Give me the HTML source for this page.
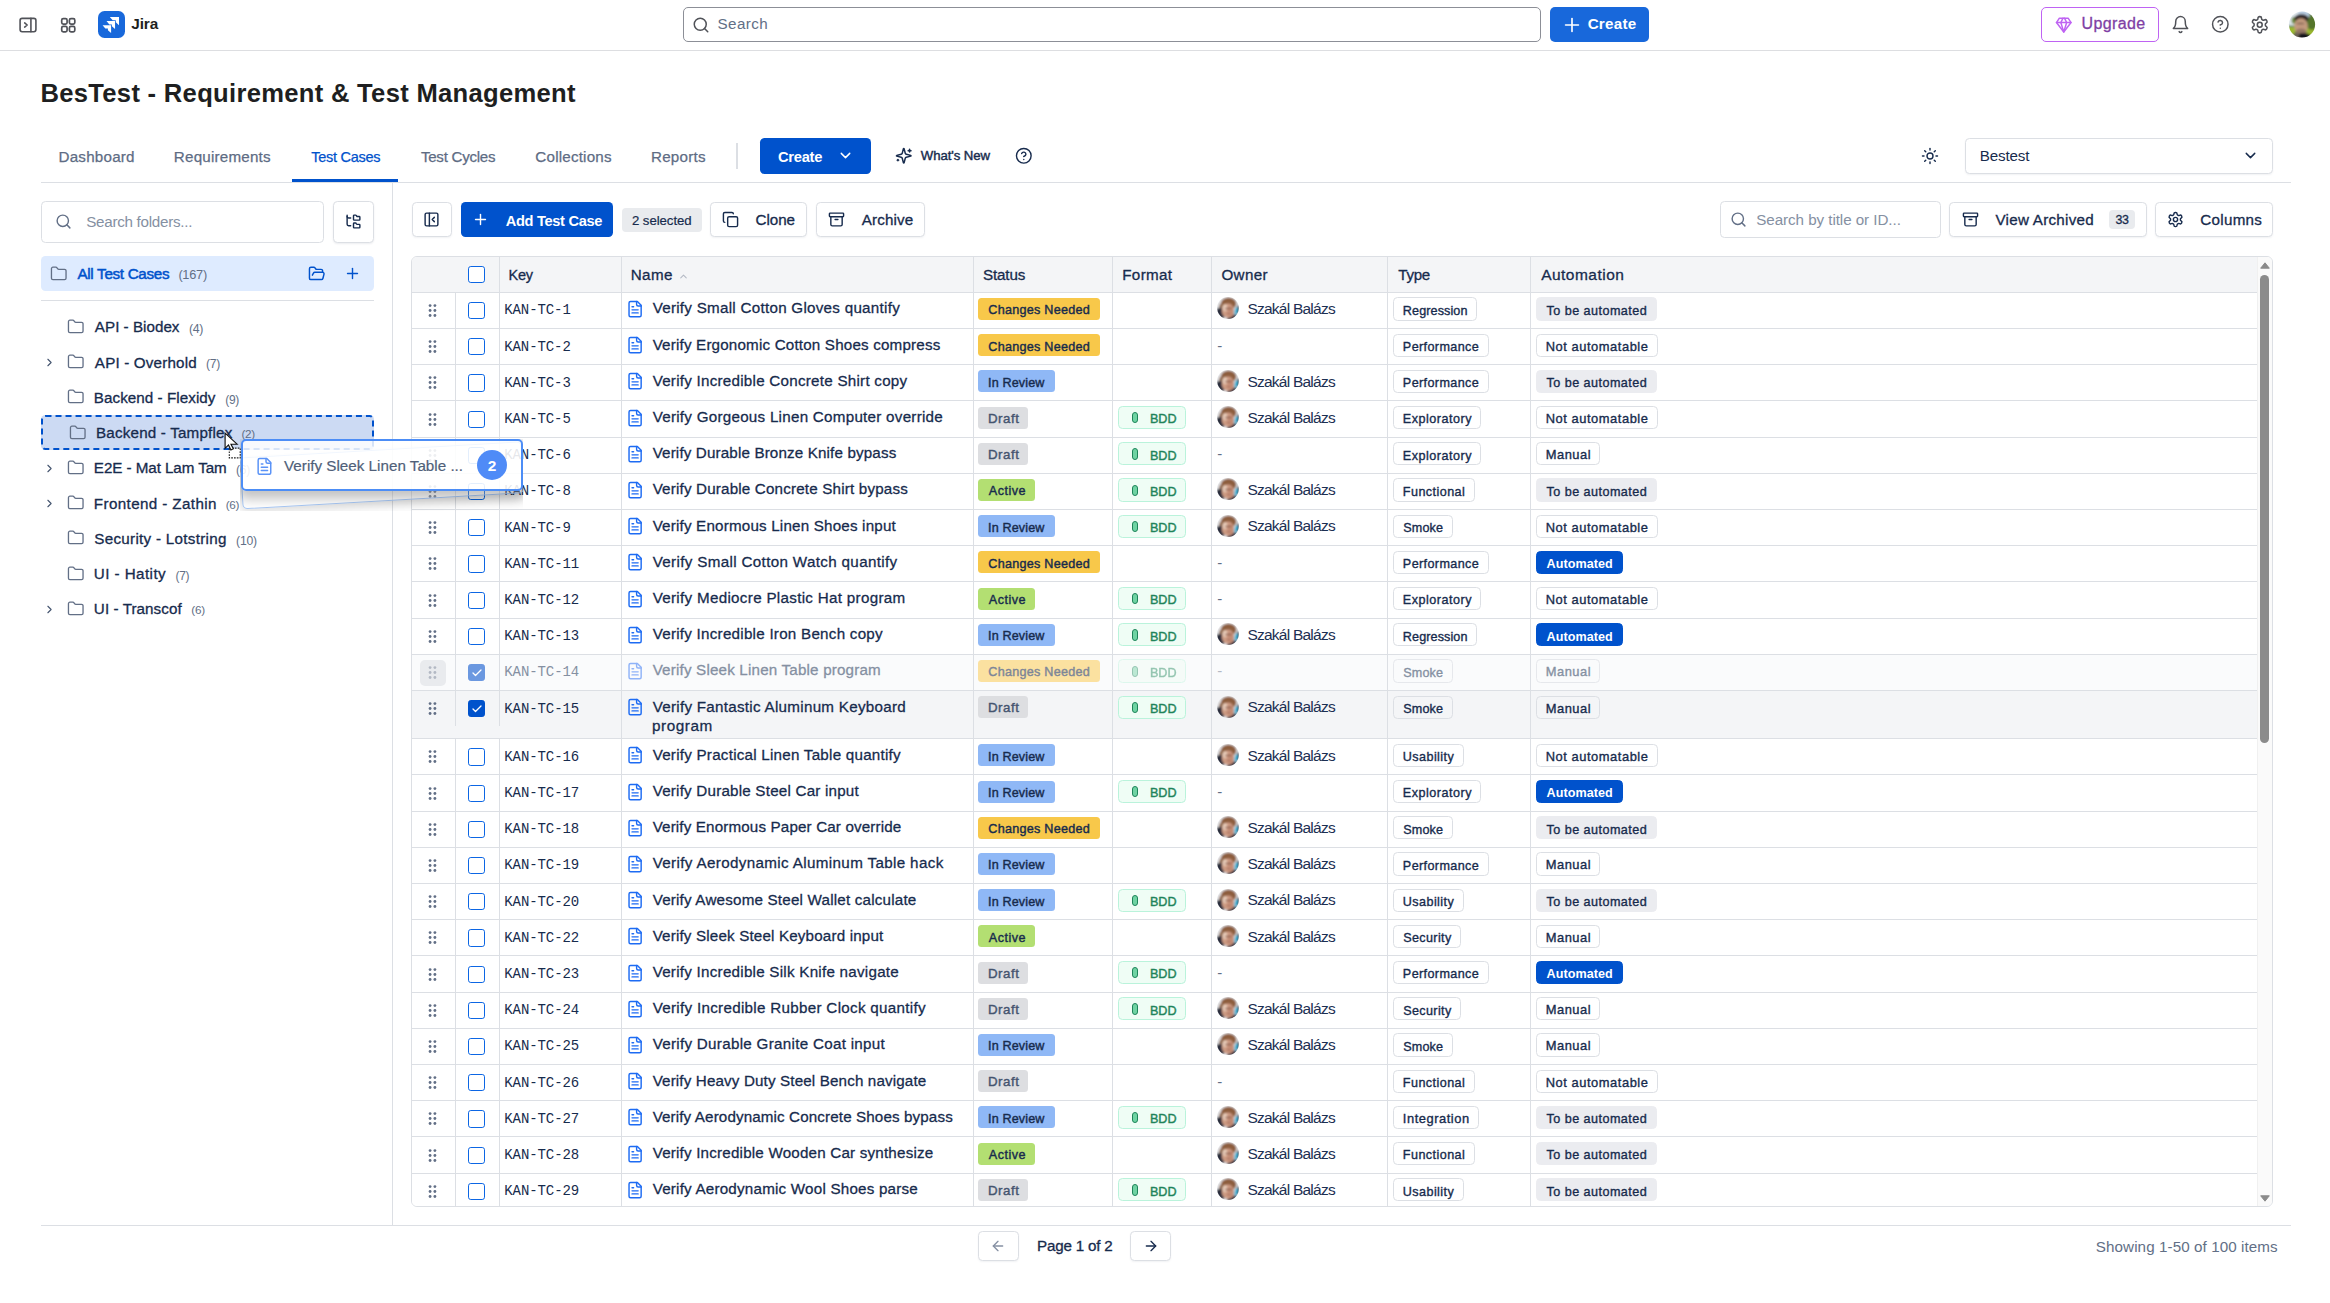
<!DOCTYPE html><html lang="en"><head><meta charset="utf-8"><title>BesTest - Requirement &amp; Test Management</title><style>
*{box-sizing:border-box;margin:0;padding:0}
html,body{width:2330px;height:1303px;overflow:hidden;background:#fff}
body{font-family:"Liberation Sans",sans-serif;color:#172b4d}
#root{position:relative;width:2330px;height:1303px;overflow:hidden}
.abs,.t,.ic{position:absolute}
.t{white-space:nowrap}
.ic{display:block;line-height:0}
.ic svg{display:block}
.nav{position:absolute;left:0;top:0;width:2330px;height:51px;border-bottom:1px solid #dddee1;background:#fff}
.jlogo{position:absolute;width:26.5px;height:26.5px;border-radius:6.5px;background:#1868db;overflow:hidden}
.topsearch{position:absolute;border:1px solid #8c8f97;border-radius:5px;background:#fff}
.topcreate{position:absolute;background:#1868db;border-radius:5px}
.upgrade{position:absolute;border:1px solid #bf63f3;border-radius:5px;background:#fff}
.btn{border:1px solid #dcdfe4;border-radius:4.5px;background:#fff;box-shadow:0 1px 2px rgba(9,30,66,.06)}
.tbl{border:1px solid #dcdfe4;border-radius:6px;overflow:hidden;background:#fff;box-sizing:content-box}
.bddb{width:67.6px;height:23.2px;border:1px solid #baf3db;background:#effdf5;border-radius:4.5px}
.tagb{height:23.2px;border:1px solid #dcdfe4;border-radius:4.5px;background:#fff}
.hl{left:0;height:1px;background:#dcdfe4}
.vl{width:1px;background:#dcdfe4}
.cb{width:17.3px;height:17.3px;border:1.4px solid #0c66e4;border-radius:2.8px;background:#fff}
.cb.on{background:#0052cc;border-color:#0052cc;display:flex;align-items:center;justify-content:center}
.pick{position:absolute;left:12.6px;top:5.2px;width:6px;height:11.2px;border:1.4px solid #1f845a;border-radius:3px;background:#6fd3a3}
.drag{overflow:hidden}
.dback{left:1px;top:0.3px;width:282px;height:52.2px;border:1.5px solid #a8c8f5;border-radius:5px;background:rgba(255,255,255,.3);transform:translateY(10.3px) rotate(-3.3deg);transform-origin:50% 50%;box-shadow:0 4px 10px 2px rgba(0,0,0,.10)}
.dfront{left:1px;top:0.3px;width:282px;height:52.2px;border:2px solid #4c8df6;border-radius:5px;background:rgba(255,255,255,.84);box-shadow:0 5px 12px 3px rgba(0,0,0,.24)}
.dbadge{width:30px;height:30px;border-radius:50%;background:#4f8bf7}

</style></head><body><div id="root">
<svg width="0" height="0" style="position:absolute"><defs><filter id="bl1" x="-20%" y="-20%" width="140%" height="140%"><feGaussianBlur stdDeviation="0.9"/></filter><filter id="bl2" x="-20%" y="-20%" width="140%" height="140%"><feGaussianBlur stdDeviation="0.85"/></filter><clipPath id="cpA"><circle cx="18" cy="18.5" r="13.1"/></clipPath><clipPath id="cpB"><circle cx="11" cy="11" r="10.9"/></clipPath></defs></svg>
<div class="nav"></div>
<span class="ic" style="left:17.80px;top:14.80px;width:20px;height:20px;color:#505258"><svg width="20" height="20" viewBox="0 0 24 24" fill="none" stroke="currentColor" stroke-width="1.9" stroke-linecap="round" stroke-linejoin="round" ><rect x="2.5" y="4" width="19" height="16" rx="2.5"/><path d="M15.5 4v16"/><path d="m8 9.5 3 2.5-3 2.5"/></svg></span>
<span class="ic" style="left:58.55px;top:15.75px;width:18.5px;height:18.5px;color:#505258"><svg width="18.5" height="18.5" viewBox="0 0 24 24" fill="none" stroke="currentColor" stroke-width="2.2" stroke-linecap="round" stroke-linejoin="round" ><rect x="3.5" y="3.5" width="7" height="7" rx="2"/><rect x="3.5" y="13.5" width="7" height="7" rx="2"/><rect x="13.5" y="3.5" width="7" height="7" rx="2"/><rect x="13.5" y="13.5" width="7" height="7" rx="2"/></svg></span>
<div class="jlogo" style="left:98.1px;top:11px"><svg width="26.5" height="26.5" viewBox="0 0 26.5 26.5"><g fill="#fff"><path d="M11.8 5.9H21V14.2L17.8 11.2V9.3H14.7Z"/><path d="M8.5 10.1H17.05V18L13.9 15.2V13.5H11.3Z"/><path d="M4.6 14.2H13.1V22L9.9 19.2V17.6H7.3Z"/></g></svg></div>
<div class="t " style="left:131.33px;top:13.60px;font-size:15.4px;line-height:20px;color:#1e1f21;letter-spacing:-0.150px;font-weight:700;">Jira</div>
<div class="topsearch" style="left:683px;top:7px;width:858px;height:35px"></div>
<span class="ic" style="left:692.00px;top:15.50px;width:18px;height:18px;color:#505258"><svg width="18" height="18" viewBox="0 0 24 24" fill="none" stroke="currentColor" stroke-width="2" stroke-linecap="round" stroke-linejoin="round" ><circle cx="11" cy="11" r="8"/><path d="m21 21-4.3-4.3"/></svg></span>
<div class="t " style="left:717.54px;top:14.30px;font-size:15.2px;line-height:20px;color:#626f86;letter-spacing:0.419px;">Search</div>
<div class="topcreate" style="left:1550px;top:7px;width:99px;height:35px"></div>
<span class="ic" style="left:1560.80px;top:13.80px;width:22px;height:22px;color:#fff"><svg width="22" height="22" viewBox="0 0 24 24" fill="none" stroke="currentColor" stroke-width="1.8" stroke-linecap="round" stroke-linejoin="round" ><path d="M5 12h14"/><path d="M12 5v14"/></svg></span>
<div class="t " style="left:1587.64px;top:13.50px;font-size:15.2px;line-height:20px;color:#fff;letter-spacing:0.268px;font-weight:700;">Create</div>
<div class="upgrade" style="left:2041px;top:7px;width:118px;height:35px"></div>
<span class="ic" style="left:2054.95px;top:16.25px;width:17.5px;height:17.5px;color:#bf63f3"><svg width="17.5" height="17.5" viewBox="0 0 24 24" fill="none" stroke="currentColor" stroke-width="2" stroke-linecap="round" stroke-linejoin="round" ><path d="M6 3h12l4 6-10 13L2 9Z"/><path d="M11 3 8 9l4 13 4-13-3-6"/><path d="M2 9h20"/></svg></span>
<div class="t " style="left:2081.50px;top:13.90px;font-size:16px;line-height:20px;color:#803fa5;letter-spacing:0.371px;-webkit-text-stroke:0.3px #803fa5;">Upgrade</div>
<span class="ic" style="left:2171.10px;top:15.10px;width:19px;height:19px;color:#505258"><svg width="19" height="19" viewBox="0 0 24 24" fill="none" stroke="currentColor" stroke-width="1.9" stroke-linecap="round" stroke-linejoin="round" ><path d="M6 8a6 6 0 0 1 12 0c0 7 3 9 3 9H3s3-2 3-9"/><path d="M10.3 21a1.94 1.94 0 0 0 3.4 0"/></svg></span>
<span class="ic" style="left:2211.40px;top:15.20px;width:18.6px;height:18.6px;color:#505258"><svg width="18.6" height="18.6" viewBox="0 0 24 24" fill="none" stroke="currentColor" stroke-width="1.9" stroke-linecap="round" stroke-linejoin="round" ><circle cx="12" cy="12" r="10"/><path d="M9.09 9a3 3 0 0 1 5.83 1c0 2-3 3-3 3"/><path d="M12 17h.01"/></svg></span>
<span class="ic" style="left:2249.85px;top:14.75px;width:19.5px;height:19.5px;color:#505258"><svg width="19.5" height="19.5" viewBox="0 0 24 24" fill="none" stroke="currentColor" stroke-width="1.9" stroke-linecap="round" stroke-linejoin="round" ><path d="M12.22 2h-.44a2 2 0 0 0-2 2v.18a2 2 0 0 1-1 1.73l-.43.25a2 2 0 0 1-2 0l-.15-.08a2 2 0 0 0-2.73.73l-.22.38a2 2 0 0 0 .73 2.73l.15.1a2 2 0 0 1 1 1.72v.51a2 2 0 0 1-1 1.74l-.15.09a2 2 0 0 0-.73 2.73l.22.38a2 2 0 0 0 2.73.73l.15-.08a2 2 0 0 1 2 0l.43.25a2 2 0 0 1 1 1.73V20a2 2 0 0 0 2 2h.44a2 2 0 0 0 2-2v-.18a2 2 0 0 1 1-1.73l.43-.25a2 2 0 0 1 2 0l.15.08a2 2 0 0 0 2.73-.73l.22-.39a2 2 0 0 0-.73-2.73l-.15-.08a2 2 0 0 1-1-1.74v-.5a2 2 0 0 1 1-1.74l.15-.09a2 2 0 0 0 .73-2.73l-.22-.38a2 2 0 0 0-2.73-.73l-.15.08a2 2 0 0 1-2 0l-.43-.25a2 2 0 0 1-1-1.73V4a2 2 0 0 0-2-2z"/><circle cx="12" cy="12" r="3"/></svg></span>
<svg class="abs" style="left:2284px;top:6px" width="36" height="36" viewBox="0 0 36 36"><g clip-path="url(#cpA)"><g filter="url(#bl1)"><rect x="0" y="0" width="36" height="36" fill="#dfe8ee"/><rect x="0" y="20.6" width="36" height="16" fill="#9ab82e"/><rect x="4" y="19.6" width="7" height="1.3" fill="#4a6a3a"/><ellipse cx="28" cy="14" rx="7.5" ry="10" fill="#55742a"/><ellipse cx="10" cy="14.5" rx="2.4" ry="3.4" fill="#6b8a3a"/><ellipse cx="19.8" cy="8.8" rx="6" ry="4.8" fill="#b9cde2"/><ellipse cx="17.4" cy="12.4" rx="7.2" ry="4.1" fill="#2f2424"/><ellipse cx="17" cy="20.2" rx="6.8" ry="8" fill="#c39a7e"/><ellipse cx="16.5" cy="17.5" rx="4" ry="1" fill="#8a6a58"/><ellipse cx="17" cy="26.3" rx="5.6" ry="3.8" fill="#937663"/><ellipse cx="19.5" cy="32.3" rx="8.8" ry="5.4" fill="#12151c"/><ellipse cx="12" cy="30" rx="3" ry="3.5" fill="#6b6256"/></g></g></svg>
<div class="t " style="left:40.48px;top:82.70px;font-size:25.6px;line-height:20px;color:#1e1f21;letter-spacing:0.294px;font-weight:700;">BesTest - Requirement &amp; Test Management</div>
<div class="t " style="left:58.46px;top:146.50px;font-size:15.2px;line-height:20px;color:#5e6c84;letter-spacing:0.223px;-webkit-text-stroke:0.25px #5e6c84;">Dashboard</div>
<div class="t " style="left:173.86px;top:146.50px;font-size:15.2px;line-height:20px;color:#5e6c84;letter-spacing:0.196px;-webkit-text-stroke:0.25px #5e6c84;">Requirements</div>
<div class="t " style="left:311.36px;top:147.00px;font-size:14.5px;line-height:20px;color:#0052cc;letter-spacing:-0.296px;-webkit-text-stroke:0.25px #0052cc;">Test Cases</div>
<div class="t " style="left:420.95px;top:146.50px;font-size:15.1px;line-height:20px;color:#5e6c84;letter-spacing:-0.257px;-webkit-text-stroke:0.25px #5e6c84;">Test Cycles</div>
<div class="t " style="left:535.34px;top:146.50px;font-size:15.2px;line-height:20px;color:#5e6c84;letter-spacing:0.192px;-webkit-text-stroke:0.25px #5e6c84;">Collections</div>
<div class="t " style="left:650.96px;top:146.50px;font-size:15.2px;line-height:20px;color:#5e6c84;letter-spacing:0.235px;-webkit-text-stroke:0.25px #5e6c84;">Reports</div>
<div class="abs" style="left:292px;top:179px;width:106px;height:3px;background:#0052cc"></div>
<div class="abs" style="left:41px;top:182px;width:2250px;height:1px;background:#dcdfe4"></div>
<div class="abs" style="left:736px;top:143px;width:2px;height:26px;background:#dcdfe4"></div>
<div class="abs" style="left:760px;top:138px;width:111px;height:36px;background:#0052cc;border-radius:4.5px"></div>
<div class="t " style="left:778.06px;top:146.50px;font-size:14.7px;line-height:20px;color:#fff;letter-spacing:-0.293px;font-weight:700;">Create</div>
<span class="ic" style="left:836.50px;top:147.00px;width:17px;height:17px;color:#fff"><svg width="17" height="17" viewBox="0 0 24 24" fill="none" stroke="currentColor" stroke-width="2" stroke-linecap="round" stroke-linejoin="round" ><path d="m6 9 6 6 6-6"/></svg></span>
<span class="ic" style="left:895.25px;top:147.25px;width:17.5px;height:17.5px;color:#172b4d"><svg width="17.5" height="17.5" viewBox="0 0 24 24" fill="none" stroke="currentColor" stroke-width="2" stroke-linecap="round" stroke-linejoin="round" ><path d="M9.937 15.5A2 2 0 0 0 8.5 14.063l-6.135-1.582a.5.5 0 0 1 0-.962L8.5 9.936A2 2 0 0 0 9.937 8.5l1.582-6.135a.5.5 0 0 1 .963 0L14.063 8.5A2 2 0 0 0 15.5 9.937l6.135 1.581a.5.5 0 0 1 0 .964L15.5 14.063a2 2 0 0 0-1.437 1.437l-1.582 6.135a.5.5 0 0 1-.963 0z"/><path d="M20 3v4"/><path d="M22 5h-4"/><path d="M4 17v2"/><path d="M5 18H3"/></svg></span>
<div class="t " style="left:920.87px;top:146.30px;font-size:13.2px;line-height:20px;color:#172b4d;letter-spacing:-0.086px;-webkit-text-stroke:0.4px #172b4d;">What's New</div>
<span class="ic" style="left:1015.00px;top:147.20px;width:17.6px;height:17.6px;color:#172b4d"><svg width="17.6" height="17.6" viewBox="0 0 24 24" fill="none" stroke="currentColor" stroke-width="1.9" stroke-linecap="round" stroke-linejoin="round" ><circle cx="12" cy="12" r="10"/><path d="M9.09 9a3 3 0 0 1 5.83 1c0 2-3 3-3 3"/><path d="M12 17h.01"/></svg></span>
<span class="ic" style="left:1921.00px;top:146.50px;width:18px;height:18px;color:#172b4d"><svg width="18" height="18" viewBox="0 0 24 24" fill="none" stroke="currentColor" stroke-width="1.9" stroke-linecap="round" stroke-linejoin="round" ><circle cx="12" cy="12" r="4"/><path d="M12 2v2"/><path d="M12 20v2"/><path d="m4.93 4.93 1.41 1.41"/><path d="m17.66 17.66 1.41 1.41"/><path d="M2 12h2"/><path d="M20 12h2"/><path d="m6.34 17.66-1.41 1.41"/><path d="m19.07 4.93-1.41 1.41"/></svg></span>
<div class="abs" style="left:1965px;top:138px;width:307.5px;height:35.5px;border:1px solid #dcdfe4;border-radius:4.5px;background:#fff;box-shadow:0 1px 2px rgba(9,30,66,.06)"></div>
<div class="t " style="left:1979.66px;top:146.00px;font-size:15.2px;line-height:20px;color:#172b4d;letter-spacing:-0.126px;">Bestest</div>
<span class="ic" style="left:2242.30px;top:147.10px;width:17px;height:17px;color:#172b4d"><svg width="17" height="17" viewBox="0 0 24 24" fill="none" stroke="currentColor" stroke-width="2" stroke-linecap="round" stroke-linejoin="round" ><path d="m6 9 6 6 6-6"/></svg></span>
<div class="abs" style="left:392px;top:183px;width:1px;height:1042px;background:#dcdfe4"></div>
<div class="abs" style="left:41px;top:201px;width:283px;height:41.5px;border:1px solid #dcdfe4;border-radius:4.5px;background:#fff"></div>
<span class="ic" style="left:54.50px;top:213.00px;width:17px;height:17px;color:#626f86"><svg width="17" height="17" viewBox="0 0 24 24" fill="none" stroke="currentColor" stroke-width="2" stroke-linecap="round" stroke-linejoin="round" ><circle cx="11" cy="11" r="8"/><path d="m21 21-4.3-4.3"/></svg></span>
<div class="t " style="left:86.24px;top:211.50px;font-size:15.2px;line-height:20px;color:#8590a2;letter-spacing:-0.279px;">Search folders...</div>
<div class="abs" style="left:333px;top:201px;width:41px;height:41.5px;border:1px solid #dcdfe4;border-radius:4.5px;background:#fff;box-shadow:0 1px 2px rgba(9,30,66,.08)"></div>
<span class="ic" style="left:345.00px;top:213.00px;width:17px;height:17px;color:#172b4d"><svg width="17" height="17" viewBox="0 0 24 24" fill="none" stroke="currentColor" stroke-width="2" stroke-linecap="round" stroke-linejoin="round" ><path d="M20 10a1 1 0 0 0 1-1V6a1 1 0 0 0-1-1h-2.5a1 1 0 0 1-.8-.4l-.9-1.2A1 1 0 0 0 15 3h-2a1 1 0 0 0-1 1v5a1 1 0 0 0 1 1Z"/><path d="M20 21a1 1 0 0 0 1-1v-3a1 1 0 0 0-1-1h-2.9a1 1 0 0 1-.88-.55l-.42-.85a1 1 0 0 0-.92-.6H13a1 1 0 0 0-1 1v5a1 1 0 0 0 1 1Z"/><path d="M3 5a2 2 0 0 0 2 2h3"/><path d="M3 3v13a2 2 0 0 0 2 2h3"/></svg></span>
<div class="abs" style="left:41px;top:256px;width:333px;height:35px;background:#deebff;border-radius:4.5px"></div>
<span class="ic" style="left:50.05px;top:264.75px;width:17.5px;height:17.5px;color:#626f86"><svg width="17.5" height="17.5" viewBox="0 0 24 24" fill="none" stroke="currentColor" stroke-width="1.8" stroke-linecap="round" stroke-linejoin="round" ><path d="M20 20a2 2 0 0 0 2-2V8a2 2 0 0 0-2-2h-7.9a2 2 0 0 1-1.69-.9L9.6 3.9A2 2 0 0 0 7.93 3H4a2 2 0 0 0-2 2v13a2 2 0 0 0 2 2Z"/></svg></span>
<div class="t " style="left:77.45px;top:263.50px;font-size:15.2px;line-height:20px;color:#0052cc;letter-spacing:-0.295px;-webkit-text-stroke:0.5px #0052cc;">All Test Cases</div>
<div class="t " style="left:178.38px;top:264.50px;font-size:12.8px;line-height:20px;color:#626f86;letter-spacing:-0.267px;">(167)</div>
<span class="ic" style="left:308.05px;top:264.75px;width:17.5px;height:17.5px;color:#0052cc"><svg width="17.5" height="17.5" viewBox="0 0 24 24" fill="none" stroke="currentColor" stroke-width="2" stroke-linecap="round" stroke-linejoin="round" ><path d="m6 14 1.5-2.9A2 2 0 0 1 9.24 10H20a2 2 0 0 1 1.94 2.5l-1.54 6a2 2 0 0 1-1.95 1.5H4a2 2 0 0 1-2-2V5a2 2 0 0 1 2-2h3.9a2 2 0 0 1 1.69.9l.81 1.2a2 2 0 0 0 1.67.9H18a2 2 0 0 1 2 2v2"/></svg></span>
<span class="ic" style="left:344.10px;top:265.30px;width:17px;height:17px;color:#0052cc"><svg width="17" height="17" viewBox="0 0 24 24" fill="none" stroke="currentColor" stroke-width="2" stroke-linecap="round" stroke-linejoin="round" ><path d="M5 12h14"/><path d="M12 5v14"/></svg></span>
<div class="abs" style="left:41px;top:300px;width:333px;height:1px;background:#dcdfe4"></div>
<div class="abs" style="left:41px;top:415px;width:333px;height:35px;border:2px dashed #0052cc;border-radius:4.5px;background:#ccdaf3"></div>
<span class="ic" style="left:67.05px;top:317.95px;width:17.5px;height:17.5px;color:#626f86"><svg width="17.5" height="17.5" viewBox="0 0 24 24" fill="none" stroke="currentColor" stroke-width="1.8" stroke-linecap="round" stroke-linejoin="round" ><path d="M20 20a2 2 0 0 0 2-2V8a2 2 0 0 0-2-2h-7.9a2 2 0 0 1-1.69-.9L9.6 3.9A2 2 0 0 0 7.93 3H4a2 2 0 0 0-2 2v13a2 2 0 0 0 2 2Z"/></svg></span>
<div class="t " style="left:94.85px;top:317.30px;font-size:15.2px;line-height:20px;color:#172b4d;letter-spacing:0.017px;-webkit-text-stroke:0.3px #172b4d;">API - Biodex</div>
<div class="t " style="left:188.92px;top:319.00px;font-size:12.3px;line-height:20px;color:#626f86;letter-spacing:-0.289px;">(4)</div>
<span class="ic" style="left:43.00px;top:356.40px;width:13px;height:13px;color:#44546f"><svg width="13" height="13" viewBox="0 0 24 24" fill="none" stroke="currentColor" stroke-width="2" stroke-linecap="round" stroke-linejoin="round" ><path d="m9 18 6-6-6-6"/></svg></span>
<span class="ic" style="left:67.05px;top:353.15px;width:17.5px;height:17.5px;color:#626f86"><svg width="17.5" height="17.5" viewBox="0 0 24 24" fill="none" stroke="currentColor" stroke-width="1.8" stroke-linecap="round" stroke-linejoin="round" ><path d="M20 20a2 2 0 0 0 2-2V8a2 2 0 0 0-2-2h-7.9a2 2 0 0 1-1.69-.9L9.6 3.9A2 2 0 0 0 7.93 3H4a2 2 0 0 0-2 2v13a2 2 0 0 0 2 2Z"/></svg></span>
<div class="t " style="left:94.85px;top:352.50px;font-size:15.2px;line-height:20px;color:#172b4d;letter-spacing:0.169px;-webkit-text-stroke:0.3px #172b4d;">API - Overhold</div>
<div class="t " style="left:205.93px;top:354.20px;font-size:12.1px;line-height:20px;color:#626f86;letter-spacing:-0.275px;">(7)</div>
<span class="ic" style="left:67.05px;top:388.45px;width:17.5px;height:17.5px;color:#626f86"><svg width="17.5" height="17.5" viewBox="0 0 24 24" fill="none" stroke="currentColor" stroke-width="1.8" stroke-linecap="round" stroke-linejoin="round" ><path d="M20 20a2 2 0 0 0 2-2V8a2 2 0 0 0-2-2h-7.9a2 2 0 0 1-1.69-.9L9.6 3.9A2 2 0 0 0 7.93 3H4a2 2 0 0 0-2 2v13a2 2 0 0 0 2 2Z"/></svg></span>
<div class="t " style="left:93.86px;top:387.80px;font-size:15.2px;line-height:20px;color:#172b4d;letter-spacing:0.055px;-webkit-text-stroke:0.3px #172b4d;">Backend - Flexidy</div>
<div class="t " style="left:225.24px;top:389.50px;font-size:12.0px;line-height:20px;color:#626f86;letter-spacing:-0.276px;">(9)</div>
<span class="ic" style="left:69.25px;top:423.55px;width:17.5px;height:17.5px;color:#626f86"><svg width="17.5" height="17.5" viewBox="0 0 24 24" fill="none" stroke="currentColor" stroke-width="1.8" stroke-linecap="round" stroke-linejoin="round" ><path d="M20 20a2 2 0 0 0 2-2V8a2 2 0 0 0-2-2h-7.9a2 2 0 0 1-1.69-.9L9.6 3.9A2 2 0 0 0 7.93 3H4a2 2 0 0 0-2 2v13a2 2 0 0 0 2 2Z"/></svg></span>
<div class="t " style="left:96.06px;top:422.90px;font-size:15.2px;line-height:20px;color:#172b4d;letter-spacing:0.181px;-webkit-text-stroke:0.3px #172b4d;">Backend - Tampflex</div>
<div class="t " style="left:241.46px;top:424.10px;font-size:11.7px;line-height:20px;color:#626f86;letter-spacing:-0.355px;">(2)</div>
<span class="ic" style="left:43.00px;top:462.20px;width:13px;height:13px;color:#44546f"><svg width="13" height="13" viewBox="0 0 24 24" fill="none" stroke="currentColor" stroke-width="2" stroke-linecap="round" stroke-linejoin="round" ><path d="m9 18 6-6-6-6"/></svg></span>
<span class="ic" style="left:67.05px;top:458.95px;width:17.5px;height:17.5px;color:#626f86"><svg width="17.5" height="17.5" viewBox="0 0 24 24" fill="none" stroke="currentColor" stroke-width="1.8" stroke-linecap="round" stroke-linejoin="round" ><path d="M20 20a2 2 0 0 0 2-2V8a2 2 0 0 0-2-2h-7.9a2 2 0 0 1-1.69-.9L9.6 3.9A2 2 0 0 0 7.93 3H4a2 2 0 0 0-2 2v13a2 2 0 0 0 2 2Z"/></svg></span>
<div class="t " style="left:93.86px;top:458.30px;font-size:15.2px;line-height:20px;color:#172b4d;letter-spacing:-0.064px;-webkit-text-stroke:0.3px #172b4d;">E2E - Mat Lam Tam</div>
<div class="t " style="left:236.03px;top:460.00px;font-size:12.1px;line-height:20px;color:#626f86;letter-spacing:-0.275px;">(6)</div>
<span class="ic" style="left:43.00px;top:497.40px;width:13px;height:13px;color:#44546f"><svg width="13" height="13" viewBox="0 0 24 24" fill="none" stroke="currentColor" stroke-width="2" stroke-linecap="round" stroke-linejoin="round" ><path d="m9 18 6-6-6-6"/></svg></span>
<span class="ic" style="left:67.05px;top:494.15px;width:17.5px;height:17.5px;color:#626f86"><svg width="17.5" height="17.5" viewBox="0 0 24 24" fill="none" stroke="currentColor" stroke-width="1.8" stroke-linecap="round" stroke-linejoin="round" ><path d="M20 20a2 2 0 0 0 2-2V8a2 2 0 0 0-2-2h-7.9a2 2 0 0 1-1.69-.9L9.6 3.9A2 2 0 0 0 7.93 3H4a2 2 0 0 0-2 2v13a2 2 0 0 0 2 2Z"/></svg></span>
<div class="t " style="left:93.86px;top:493.50px;font-size:15.2px;line-height:20px;color:#172b4d;letter-spacing:0.381px;-webkit-text-stroke:0.3px #172b4d;">Frontend - Zathin</div>
<div class="t " style="left:225.66px;top:494.70px;font-size:11.7px;line-height:20px;color:#626f86;letter-spacing:-0.255px;">(6)</div>
<span class="ic" style="left:67.05px;top:529.45px;width:17.5px;height:17.5px;color:#626f86"><svg width="17.5" height="17.5" viewBox="0 0 24 24" fill="none" stroke="currentColor" stroke-width="1.8" stroke-linecap="round" stroke-linejoin="round" ><path d="M20 20a2 2 0 0 0 2-2V8a2 2 0 0 0-2-2h-7.9a2 2 0 0 1-1.69-.9L9.6 3.9A2 2 0 0 0 7.93 3H4a2 2 0 0 0-2 2v13a2 2 0 0 0 2 2Z"/></svg></span>
<div class="t " style="left:94.24px;top:528.80px;font-size:15.2px;line-height:20px;color:#172b4d;letter-spacing:0.294px;-webkit-text-stroke:0.3px #172b4d;">Security - Lotstring</div>
<div class="t " style="left:236.12px;top:530.50px;font-size:12.2px;line-height:20px;color:#626f86;letter-spacing:-0.249px;">(10)</div>
<span class="ic" style="left:67.05px;top:564.65px;width:17.5px;height:17.5px;color:#626f86"><svg width="17.5" height="17.5" viewBox="0 0 24 24" fill="none" stroke="currentColor" stroke-width="1.8" stroke-linecap="round" stroke-linejoin="round" ><path d="M20 20a2 2 0 0 0 2-2V8a2 2 0 0 0-2-2h-7.9a2 2 0 0 1-1.69-.9L9.6 3.9A2 2 0 0 0 7.93 3H4a2 2 0 0 0-2 2v13a2 2 0 0 0 2 2Z"/></svg></span>
<div class="t " style="left:93.86px;top:564.00px;font-size:15.2px;line-height:20px;color:#172b4d;letter-spacing:0.428px;-webkit-text-stroke:0.3px #172b4d;">UI - Hatity</div>
<div class="t " style="left:175.45px;top:565.70px;font-size:11.9px;line-height:20px;color:#626f86;letter-spacing:-0.269px;">(7)</div>
<span class="ic" style="left:43.00px;top:603.10px;width:13px;height:13px;color:#44546f"><svg width="13" height="13" viewBox="0 0 24 24" fill="none" stroke="currentColor" stroke-width="2" stroke-linecap="round" stroke-linejoin="round" ><path d="m9 18 6-6-6-6"/></svg></span>
<span class="ic" style="left:67.05px;top:599.85px;width:17.5px;height:17.5px;color:#626f86"><svg width="17.5" height="17.5" viewBox="0 0 24 24" fill="none" stroke="currentColor" stroke-width="1.8" stroke-linecap="round" stroke-linejoin="round" ><path d="M20 20a2 2 0 0 0 2-2V8a2 2 0 0 0-2-2h-7.9a2 2 0 0 1-1.69-.9L9.6 3.9A2 2 0 0 0 7.93 3H4a2 2 0 0 0-2 2v13a2 2 0 0 0 2 2Z"/></svg></span>
<div class="t " style="left:93.86px;top:599.20px;font-size:15.2px;line-height:20px;color:#172b4d;letter-spacing:0.072px;-webkit-text-stroke:0.3px #172b4d;">UI - Transcof</div>
<div class="t " style="left:191.36px;top:600.40px;font-size:11.7px;line-height:20px;color:#626f86;letter-spacing:-0.255px;">(6)</div>
<div class="abs btn" style="left:411.5px;top:202px;width:40px;height:35px"></div>
<span class="ic" style="left:423.00px;top:211.00px;width:17px;height:17px;color:#172b4d"><svg width="17" height="17" viewBox="0 0 24 24" fill="none" stroke="currentColor" stroke-width="2" stroke-linecap="round" stroke-linejoin="round" ><rect width="18" height="18" x="3" y="3" rx="2"/><path d="M9 3v18"/><path d="m16 15-3-3 3-3"/></svg></span>
<div class="abs" style="left:461px;top:202px;width:152px;height:35px;background:#0052cc;border-radius:4.5px"></div>
<span class="ic" style="left:472.00px;top:211.00px;width:17px;height:17px;color:#fff"><svg width="17" height="17" viewBox="0 0 24 24" fill="none" stroke="currentColor" stroke-width="2" stroke-linecap="round" stroke-linejoin="round" ><path d="M5 12h14"/><path d="M12 5v14"/></svg></span>
<div class="t " style="left:505.65px;top:210.80px;font-size:14.6px;line-height:20px;color:#fff;letter-spacing:-0.293px;font-weight:700;">Add Test Case</div>
<div class="abs" style="left:622.3px;top:208px;width:79.5px;height:23.7px;background:#e9ebee;border-radius:4px"></div>
<div class="t " style="left:631.94px;top:210.50px;font-size:13.2px;line-height:20px;color:#172b4d;letter-spacing:-0.045px;-webkit-text-stroke:0.2px #172b4d;">2 selected</div>
<div class="abs btn" style="left:710.3px;top:202px;width:96.6px;height:35px"></div>
<span class="ic" style="left:722.30px;top:211.00px;width:17px;height:17px;color:#172b4d"><svg width="17" height="17" viewBox="0 0 24 24" fill="none" stroke="currentColor" stroke-width="2" stroke-linecap="round" stroke-linejoin="round" ><rect width="14" height="14" x="8" y="8" rx="2" ry="2"/><path d="M4 16c-1.1 0-2-.9-2-2V4c0-1.1.9-2 2-2h10c1.1 0 2 .9 2 2"/></svg></span>
<div class="t " style="left:755.44px;top:210.30px;font-size:15.2px;line-height:20px;color:#172b4d;letter-spacing:-0.017px;-webkit-text-stroke:0.3px #172b4d;">Clone</div>
<div class="abs btn" style="left:816.4px;top:202px;width:108.2px;height:35px"></div>
<span class="ic" style="left:828.10px;top:211.00px;width:17px;height:17px;color:#172b4d"><svg width="17" height="17" viewBox="0 0 24 24" fill="none" stroke="currentColor" stroke-width="2" stroke-linecap="round" stroke-linejoin="round" ><rect width="20" height="5" x="2" y="3" rx="1"/><path d="M4 8v11a2 2 0 0 0 2 2h12a2 2 0 0 0 2-2V8"/><path d="M10 12h4"/></svg></span>
<div class="t " style="left:861.65px;top:210.30px;font-size:15.2px;line-height:20px;color:#172b4d;letter-spacing:0.159px;-webkit-text-stroke:0.3px #172b4d;">Archive</div>
<div class="abs" style="left:1720.3px;top:201.4px;width:220.4px;height:36.2px;border:1px solid #dcdfe4;border-radius:4.5px;background:#fff"></div>
<span class="ic" style="left:1729.50px;top:211.00px;width:17px;height:17px;color:#626f86"><svg width="17" height="17" viewBox="0 0 24 24" fill="none" stroke="currentColor" stroke-width="2" stroke-linecap="round" stroke-linejoin="round" ><circle cx="11" cy="11" r="8"/><path d="m21 21-4.3-4.3"/></svg></span>
<div class="t " style="left:1756.24px;top:209.70px;font-size:15.2px;line-height:20px;color:#8590a2;letter-spacing:-0.061px;">Search by title or ID...</div>
<div class="abs btn" style="left:1949.3px;top:202px;width:197.4px;height:35px"></div>
<span class="ic" style="left:1961.50px;top:210.50px;width:17px;height:17px;color:#172b4d"><svg width="17" height="17" viewBox="0 0 24 24" fill="none" stroke="currentColor" stroke-width="2" stroke-linecap="round" stroke-linejoin="round" ><rect width="20" height="5" x="2" y="3" rx="1"/><path d="M4 8v11a2 2 0 0 0 2 2h12a2 2 0 0 0 2-2V8"/><path d="M10 12h4"/></svg></span>
<div class="t " style="left:1995.45px;top:210.30px;font-size:15.2px;line-height:20px;color:#172b4d;letter-spacing:0.266px;-webkit-text-stroke:0.3px #172b4d;">View Archived</div>
<div class="abs" style="left:2108.9px;top:210.3px;width:25.9px;height:18.4px;background:#e9ebee;border-radius:4px"></div>
<div class="t " style="left:2115.38px;top:210.00px;font-size:12.4px;line-height:20px;color:#172b4d;letter-spacing:-0.257px;-webkit-text-stroke:0.3px #172b4d;">33</div>
<div class="abs btn" style="left:2155.4px;top:202px;width:117.3px;height:35px"></div>
<span class="ic" style="left:2167.00px;top:210.50px;width:17px;height:17px;color:#172b4d"><svg width="17" height="17" viewBox="0 0 24 24" fill="none" stroke="currentColor" stroke-width="2" stroke-linecap="round" stroke-linejoin="round" ><path d="M12.22 2h-.44a2 2 0 0 0-2 2v.18a2 2 0 0 1-1 1.73l-.43.25a2 2 0 0 1-2 0l-.15-.08a2 2 0 0 0-2.73.73l-.22.38a2 2 0 0 0 .73 2.73l.15.1a2 2 0 0 1 1 1.72v.51a2 2 0 0 1-1 1.74l-.15.09a2 2 0 0 0-.73 2.73l.22.38a2 2 0 0 0 2.73.73l.15-.08a2 2 0 0 1 2 0l.43.25a2 2 0 0 1 1 1.73V20a2 2 0 0 0 2 2h.44a2 2 0 0 0 2-2v-.18a2 2 0 0 1 1-1.73l.43-.25a2 2 0 0 1 2 0l.15.08a2 2 0 0 0 2.73-.73l.22-.39a2 2 0 0 0-.73-2.73l-.15-.08a2 2 0 0 1-1-1.74v-.5a2 2 0 0 1 1-1.74l.15-.09a2 2 0 0 0 .73-2.73l-.22-.38a2 2 0 0 0-2.73-.73l-.15.08a2 2 0 0 1-2 0l-.43-.25a2 2 0 0 1-1-1.73V4a2 2 0 0 0-2-2z"/><circle cx="12" cy="12" r="3"/></svg></span>
<div class="t " style="left:2200.34px;top:210.30px;font-size:15.2px;line-height:20px;color:#172b4d;letter-spacing:0.280px;-webkit-text-stroke:0.3px #172b4d;">Columns</div>
<div class="abs tbl" style="left:411px;top:256px;width:1860px;height:949px"><div class="abs" style="left:-412px;top:-257px;width:2330px;height:1303px">
<div class="abs" style="left:412px;top:257px;width:1845px;height:35px;background:#f4f5f7"></div>
<div class="abs hl" style="left:412px;top:292px;width:1845px"></div>
<div class="abs vl" style="left:499.0px;top:257px;height:35px"></div>
<div class="abs vl" style="left:620.7px;top:257px;height:35px"></div>
<div class="abs vl" style="left:972.5px;top:257px;height:35px"></div>
<div class="abs vl" style="left:1111.5px;top:257px;height:35px"></div>
<div class="abs vl" style="left:1210.5px;top:257px;height:35px"></div>
<div class="abs vl" style="left:1386.5px;top:257px;height:35px"></div>
<div class="abs vl" style="left:1529.5px;top:257px;height:35px"></div>
<div class="abs cb" style="left:468px;top:266px"></div>
<div class="t " style="left:508.51px;top:265.20px;font-size:14.5px;line-height:20px;color:#172b4d;letter-spacing:-0.284px;-webkit-text-stroke:0.3px #172b4d;">Key</div>
<div class="t " style="left:630.66px;top:264.70px;font-size:15.2px;line-height:20px;color:#172b4d;letter-spacing:0.428px;-webkit-text-stroke:0.3px #172b4d;">Name</div>
<div class="t " style="left:982.94px;top:264.70px;font-size:15.2px;line-height:20px;color:#172b4d;letter-spacing:-0.129px;-webkit-text-stroke:0.3px #172b4d;">Status</div>
<div class="t " style="left:1122.26px;top:264.70px;font-size:15.2px;line-height:20px;color:#172b4d;letter-spacing:0.338px;-webkit-text-stroke:0.3px #172b4d;">Format</div>
<div class="t " style="left:1221.44px;top:264.70px;font-size:15.2px;line-height:20px;color:#172b4d;letter-spacing:0.371px;-webkit-text-stroke:0.3px #172b4d;">Owner</div>
<div class="t " style="left:1398.25px;top:264.70px;font-size:15.1px;line-height:20px;color:#172b4d;letter-spacing:-0.243px;-webkit-text-stroke:0.3px #172b4d;">Type</div>
<div class="t " style="left:1541.14px;top:264.70px;font-size:15.5px;line-height:20px;color:#172b4d;letter-spacing:0.490px;-webkit-text-stroke:0.3px #172b4d;">Automation</div>
<span class="ic" style="left:678.2px;top:270.5px;width:11px;height:11px;color:#b3b9c4"><svg width="11" height="11" viewBox="0 0 24 24" fill="none" stroke="currentColor" stroke-width="2.2" stroke-linecap="round" stroke-linejoin="round" ><path d="m18 15-6-6-6 6"/></svg></span>
<div class="abs" style="left:412px;top:293px;width:1845px;height:36px;background:#fff"></div>
<div class="abs hl" style="left:412px;top:328px;width:1845px"></div>
<div class="abs vl" style="left:455.0px;top:293px;height:36px"></div>
<div class="abs vl" style="left:499.0px;top:293px;height:36px"></div>
<div class="abs vl" style="left:620.7px;top:293px;height:36px"></div>
<div class="abs vl" style="left:972.5px;top:293px;height:36px"></div>
<div class="abs vl" style="left:1111.5px;top:293px;height:36px"></div>
<div class="abs vl" style="left:1210.5px;top:293px;height:36px"></div>
<div class="abs vl" style="left:1386.5px;top:293px;height:36px"></div>
<div class="abs vl" style="left:1529.5px;top:293px;height:36px"></div>
<span class="ic" style="left:424.2px;top:301.90px;width:17px;height:17px;color:#626f86"><svg width="17" height="17" viewBox="0 0 24 24" fill="none" stroke="currentColor" stroke-width="2" stroke-linecap="round" stroke-linejoin="round" ><circle cx="8.6" cy="5" r="2" fill="currentColor" stroke="none"/><circle cx="8.6" cy="12" r="2" fill="currentColor" stroke="none"/><circle cx="8.6" cy="19" r="2" fill="currentColor" stroke="none"/><circle cx="15.4" cy="5" r="2" fill="currentColor" stroke="none"/><circle cx="15.4" cy="12" r="2" fill="currentColor" stroke="none"/><circle cx="15.4" cy="19" r="2" fill="currentColor" stroke="none"/></svg></span>
<div class="abs cb" style="left:468px;top:302.00px"></div>
<div class="t " style="left:504.28px;top:300.40px;font-size:14px;line-height:20px;color:#172b4d;letter-spacing:-0.097px;font-family:'Liberation Mono',monospace;">KAN-TC-1</div>
<span class="ic" style="left:625.6px;top:300.00px;width:18.2px;height:18.2px;color:#1d6bf3"><svg width="18.2" height="18.2" viewBox="0 0 24 24" fill="none" stroke="currentColor" stroke-width="1.9" stroke-linecap="round" stroke-linejoin="round" ><path d="M15 2H6a2 2 0 0 0-2 2v16a2 2 0 0 0 2 2h12a2 2 0 0 0 2-2V7Z"/><path d="M14 2v4a2 2 0 0 0 2 2h4"/><path d="M10 9H8"/><path d="M16 13H8"/><path d="M16 17H8"/></svg></span>
<div class="t " style="left:652.65px;top:298.00px;font-size:15.2px;line-height:19px;color:#172b4d;letter-spacing:0.266px;-webkit-text-stroke:0.28px #172b4d;">Verify Small Cotton Gloves quantify</div>
<div class="abs" style="left:978.1px;top:297.90px;width:121.9px;height:22.05px;background:#f8c84a;border-radius:3.5px"></div>
<div class="t " style="left:988.37px;top:300.40px;font-size:12.6px;line-height:20px;color:#172b4d;letter-spacing:0.256px;-webkit-text-stroke:0.4px #172b4d;">Changes Needed</div>
<svg class="abs" style="left:1217.00px;top:297.30px" width="22" height="22" viewBox="0 0 22 22"><g clip-path="url(#cpB)"><g filter="url(#bl2)"><rect x="-2" y="-2" width="26" height="26" fill="#e6e7ea"/><ellipse cx="3.2" cy="16.5" rx="5.2" ry="6" fill="#2a2d3d"/><ellipse cx="17" cy="21" rx="7" ry="3.6" fill="#2a2d3d"/><ellipse cx="21.3" cy="12.5" rx="1.5" ry="4.5" fill="#4a4d5a"/><ellipse cx="11.6" cy="6.6" rx="7.8" ry="6.2" fill="#8d5d3c"/><ellipse cx="3.9" cy="9.3" rx="1.7" ry="2.2" fill="#8f6a50"/><ellipse cx="11" cy="13.8" rx="6.2" ry="7.3" fill="#cf9c84"/><ellipse cx="13.8" cy="14.5" rx="3" ry="5.5" fill="#c48d76"/><ellipse cx="8" cy="10.6" rx="2.2" ry="3.4" fill="#ecd2bf"/><ellipse cx="11.2" cy="11.4" rx="3.6" ry="0.8" fill="#8e5f4e"/><ellipse cx="11.3" cy="16.8" rx="2.2" ry="0.8" fill="#a8705f"/><ellipse cx="19.2" cy="14" rx="1.45" ry="3.7" fill="#1fb0d6" transform="rotate(10 19.2 14)"/></g></g></svg>
<div class="t " style="left:1247.42px;top:299.00px;font-size:15.5px;line-height:19px;color:#1c2f52;letter-spacing:-0.759px;">Szakál Balázs</div>
<div class="abs tagb" style="left:1393.1px;top:297.40px;width:83.7px;border-color:#dcdfe4"></div>
<div class="t " style="left:1402.86px;top:300.80px;font-size:12.6px;line-height:20px;color:#172b4d;letter-spacing:0.097px;-webkit-text-stroke:0.35px #172b4d;">Regression</div>
<div class="abs tagb" style="left:1536px;top:297.40px;width:120.7px;background:#ebecf0;border-color:#ebecf0"></div>
<div class="t " style="left:1546.57px;top:300.80px;font-size:12.6px;line-height:20px;color:#172b4d;letter-spacing:0.452px;-webkit-text-stroke:0.35px #172b4d;">To be automated</div>
<div class="abs" style="left:412px;top:329px;width:1845px;height:36px;background:#fff"></div>
<div class="abs hl" style="left:412px;top:364px;width:1845px"></div>
<div class="abs vl" style="left:455.0px;top:329px;height:36px"></div>
<div class="abs vl" style="left:499.0px;top:329px;height:36px"></div>
<div class="abs vl" style="left:620.7px;top:329px;height:36px"></div>
<div class="abs vl" style="left:972.5px;top:329px;height:36px"></div>
<div class="abs vl" style="left:1111.5px;top:329px;height:36px"></div>
<div class="abs vl" style="left:1210.5px;top:329px;height:36px"></div>
<div class="abs vl" style="left:1386.5px;top:329px;height:36px"></div>
<div class="abs vl" style="left:1529.5px;top:329px;height:36px"></div>
<span class="ic" style="left:424.2px;top:338.10px;width:17px;height:17px;color:#626f86"><svg width="17" height="17" viewBox="0 0 24 24" fill="none" stroke="currentColor" stroke-width="2" stroke-linecap="round" stroke-linejoin="round" ><circle cx="8.6" cy="5" r="2" fill="currentColor" stroke="none"/><circle cx="8.6" cy="12" r="2" fill="currentColor" stroke="none"/><circle cx="8.6" cy="19" r="2" fill="currentColor" stroke="none"/><circle cx="15.4" cy="5" r="2" fill="currentColor" stroke="none"/><circle cx="15.4" cy="12" r="2" fill="currentColor" stroke="none"/><circle cx="15.4" cy="19" r="2" fill="currentColor" stroke="none"/></svg></span>
<div class="abs cb" style="left:468px;top:338.20px"></div>
<div class="t " style="left:504.28px;top:336.60px;font-size:14px;line-height:20px;color:#172b4d;letter-spacing:-0.097px;font-family:'Liberation Mono',monospace;">KAN-TC-2</div>
<span class="ic" style="left:625.6px;top:336.20px;width:18.2px;height:18.2px;color:#1d6bf3"><svg width="18.2" height="18.2" viewBox="0 0 24 24" fill="none" stroke="currentColor" stroke-width="1.9" stroke-linecap="round" stroke-linejoin="round" ><path d="M15 2H6a2 2 0 0 0-2 2v16a2 2 0 0 0 2 2h12a2 2 0 0 0 2-2V7Z"/><path d="M14 2v4a2 2 0 0 0 2 2h4"/><path d="M10 9H8"/><path d="M16 13H8"/><path d="M16 17H8"/></svg></span>
<div class="t " style="left:652.65px;top:335.00px;font-size:15.2px;line-height:19px;color:#172b4d;letter-spacing:0.176px;-webkit-text-stroke:0.28px #172b4d;">Verify Ergonomic Cotton Shoes compress</div>
<div class="abs" style="left:978.1px;top:334.10px;width:121.9px;height:22.05px;background:#f8c84a;border-radius:3.5px"></div>
<div class="t " style="left:988.37px;top:336.60px;font-size:12.6px;line-height:20px;color:#172b4d;letter-spacing:0.256px;-webkit-text-stroke:0.4px #172b4d;">Changes Needed</div>
<div class="t " style="left:1217.35px;top:335.60px;font-size:15px;line-height:20px;color:#626f86;letter-spacing:0.000px;">-</div>
<div class="abs tagb" style="left:1393.1px;top:333.60px;width:95.6px;border-color:#dcdfe4"></div>
<div class="t " style="left:1402.86px;top:337.00px;font-size:12.6px;line-height:20px;color:#172b4d;letter-spacing:0.377px;-webkit-text-stroke:0.35px #172b4d;">Performance</div>
<div class="abs tagb" style="left:1536px;top:333.60px;width:121.7px;border-color:#dcdfe4"></div>
<div class="t " style="left:1545.73px;top:336.50px;font-size:12.9px;line-height:20px;color:#172b4d;letter-spacing:0.544px;-webkit-text-stroke:0.35px #172b4d;">Not automatable</div>
<div class="abs" style="left:412px;top:365px;width:1845px;height:36px;background:#fff"></div>
<div class="abs hl" style="left:412px;top:400px;width:1845px"></div>
<div class="abs vl" style="left:455.0px;top:365px;height:36px"></div>
<div class="abs vl" style="left:499.0px;top:365px;height:36px"></div>
<div class="abs vl" style="left:620.7px;top:365px;height:36px"></div>
<div class="abs vl" style="left:972.5px;top:365px;height:36px"></div>
<div class="abs vl" style="left:1111.5px;top:365px;height:36px"></div>
<div class="abs vl" style="left:1210.5px;top:365px;height:36px"></div>
<div class="abs vl" style="left:1386.5px;top:365px;height:36px"></div>
<div class="abs vl" style="left:1529.5px;top:365px;height:36px"></div>
<span class="ic" style="left:424.2px;top:374.30px;width:17px;height:17px;color:#626f86"><svg width="17" height="17" viewBox="0 0 24 24" fill="none" stroke="currentColor" stroke-width="2" stroke-linecap="round" stroke-linejoin="round" ><circle cx="8.6" cy="5" r="2" fill="currentColor" stroke="none"/><circle cx="8.6" cy="12" r="2" fill="currentColor" stroke="none"/><circle cx="8.6" cy="19" r="2" fill="currentColor" stroke="none"/><circle cx="15.4" cy="5" r="2" fill="currentColor" stroke="none"/><circle cx="15.4" cy="12" r="2" fill="currentColor" stroke="none"/><circle cx="15.4" cy="19" r="2" fill="currentColor" stroke="none"/></svg></span>
<div class="abs cb" style="left:468px;top:374.40px"></div>
<div class="t " style="left:504.28px;top:372.80px;font-size:14px;line-height:20px;color:#172b4d;letter-spacing:-0.097px;font-family:'Liberation Mono',monospace;">KAN-TC-3</div>
<span class="ic" style="left:625.6px;top:372.40px;width:18.2px;height:18.2px;color:#1d6bf3"><svg width="18.2" height="18.2" viewBox="0 0 24 24" fill="none" stroke="currentColor" stroke-width="1.9" stroke-linecap="round" stroke-linejoin="round" ><path d="M15 2H6a2 2 0 0 0-2 2v16a2 2 0 0 0 2 2h12a2 2 0 0 0 2-2V7Z"/><path d="M14 2v4a2 2 0 0 0 2 2h4"/><path d="M10 9H8"/><path d="M16 13H8"/><path d="M16 17H8"/></svg></span>
<div class="t " style="left:652.65px;top:371.00px;font-size:15.2px;line-height:19px;color:#172b4d;letter-spacing:0.246px;-webkit-text-stroke:0.28px #172b4d;">Verify Incredible Concrete Shirt copy</div>
<div class="abs" style="left:978.1px;top:370.30px;width:76.9px;height:22.05px;background:#8fb8f6;border-radius:3.5px"></div>
<div class="t " style="left:988.05px;top:372.80px;font-size:12.6px;line-height:20px;color:#172b4d;letter-spacing:0.134px;-webkit-text-stroke:0.4px #172b4d;">In Review</div>
<svg class="abs" style="left:1217.00px;top:369.70px" width="22" height="22" viewBox="0 0 22 22"><g clip-path="url(#cpB)"><g filter="url(#bl2)"><rect x="-2" y="-2" width="26" height="26" fill="#e6e7ea"/><ellipse cx="3.2" cy="16.5" rx="5.2" ry="6" fill="#2a2d3d"/><ellipse cx="17" cy="21" rx="7" ry="3.6" fill="#2a2d3d"/><ellipse cx="21.3" cy="12.5" rx="1.5" ry="4.5" fill="#4a4d5a"/><ellipse cx="11.6" cy="6.6" rx="7.8" ry="6.2" fill="#8d5d3c"/><ellipse cx="3.9" cy="9.3" rx="1.7" ry="2.2" fill="#8f6a50"/><ellipse cx="11" cy="13.8" rx="6.2" ry="7.3" fill="#cf9c84"/><ellipse cx="13.8" cy="14.5" rx="3" ry="5.5" fill="#c48d76"/><ellipse cx="8" cy="10.6" rx="2.2" ry="3.4" fill="#ecd2bf"/><ellipse cx="11.2" cy="11.4" rx="3.6" ry="0.8" fill="#8e5f4e"/><ellipse cx="11.3" cy="16.8" rx="2.2" ry="0.8" fill="#a8705f"/><ellipse cx="19.2" cy="14" rx="1.45" ry="3.7" fill="#1fb0d6" transform="rotate(10 19.2 14)"/></g></g></svg>
<div class="t " style="left:1247.42px;top:372.00px;font-size:15.5px;line-height:19px;color:#1c2f52;letter-spacing:-0.759px;">Szakál Balázs</div>
<div class="abs tagb" style="left:1393.1px;top:369.80px;width:95.6px;border-color:#dcdfe4"></div>
<div class="t " style="left:1402.86px;top:373.20px;font-size:12.6px;line-height:20px;color:#172b4d;letter-spacing:0.377px;-webkit-text-stroke:0.35px #172b4d;">Performance</div>
<div class="abs tagb" style="left:1536px;top:369.80px;width:120.7px;background:#ebecf0;border-color:#ebecf0"></div>
<div class="t " style="left:1546.57px;top:373.20px;font-size:12.6px;line-height:20px;color:#172b4d;letter-spacing:0.452px;-webkit-text-stroke:0.35px #172b4d;">To be automated</div>
<div class="abs" style="left:412px;top:401px;width:1845px;height:37px;background:#fff"></div>
<div class="abs hl" style="left:412px;top:437px;width:1845px"></div>
<div class="abs vl" style="left:455.0px;top:401px;height:37px"></div>
<div class="abs vl" style="left:499.0px;top:401px;height:37px"></div>
<div class="abs vl" style="left:620.7px;top:401px;height:37px"></div>
<div class="abs vl" style="left:972.5px;top:401px;height:37px"></div>
<div class="abs vl" style="left:1111.5px;top:401px;height:37px"></div>
<div class="abs vl" style="left:1210.5px;top:401px;height:37px"></div>
<div class="abs vl" style="left:1386.5px;top:401px;height:37px"></div>
<div class="abs vl" style="left:1529.5px;top:401px;height:37px"></div>
<span class="ic" style="left:424.2px;top:410.50px;width:17px;height:17px;color:#626f86"><svg width="17" height="17" viewBox="0 0 24 24" fill="none" stroke="currentColor" stroke-width="2" stroke-linecap="round" stroke-linejoin="round" ><circle cx="8.6" cy="5" r="2" fill="currentColor" stroke="none"/><circle cx="8.6" cy="12" r="2" fill="currentColor" stroke="none"/><circle cx="8.6" cy="19" r="2" fill="currentColor" stroke="none"/><circle cx="15.4" cy="5" r="2" fill="currentColor" stroke="none"/><circle cx="15.4" cy="12" r="2" fill="currentColor" stroke="none"/><circle cx="15.4" cy="19" r="2" fill="currentColor" stroke="none"/></svg></span>
<div class="abs cb" style="left:468px;top:410.60px"></div>
<div class="t " style="left:504.28px;top:409.00px;font-size:14px;line-height:20px;color:#172b4d;letter-spacing:-0.097px;font-family:'Liberation Mono',monospace;">KAN-TC-5</div>
<span class="ic" style="left:625.6px;top:408.60px;width:18.2px;height:18.2px;color:#1d6bf3"><svg width="18.2" height="18.2" viewBox="0 0 24 24" fill="none" stroke="currentColor" stroke-width="1.9" stroke-linecap="round" stroke-linejoin="round" ><path d="M15 2H6a2 2 0 0 0-2 2v16a2 2 0 0 0 2 2h12a2 2 0 0 0 2-2V7Z"/><path d="M14 2v4a2 2 0 0 0 2 2h4"/><path d="M10 9H8"/><path d="M16 13H8"/><path d="M16 17H8"/></svg></span>
<div class="t " style="left:652.65px;top:407.00px;font-size:15.2px;line-height:19px;color:#172b4d;letter-spacing:0.259px;-webkit-text-stroke:0.28px #172b4d;">Verify Gorgeous Linen Computer override</div>
<div class="abs" style="left:978.1px;top:406.50px;width:49.9px;height:22.05px;background:#dddee1;border-radius:3.5px"></div>
<div class="t " style="left:988.00px;top:408.50px;font-size:13.3px;line-height:20px;color:#44546f;letter-spacing:0.509px;-webkit-text-stroke:0.4px #44546f;">Draft</div>
<div class="abs bddb" style="left:1118.1px;top:406.00px"><span class="pick"></span></div>
<div class="t " style="left:1149.95px;top:409.40px;font-size:12.6px;line-height:20px;color:#1f845a;letter-spacing:-0.002px;-webkit-text-stroke:0.4px #1f845a;">BDD</div>
<svg class="abs" style="left:1217.00px;top:405.90px" width="22" height="22" viewBox="0 0 22 22"><g clip-path="url(#cpB)"><g filter="url(#bl2)"><rect x="-2" y="-2" width="26" height="26" fill="#e6e7ea"/><ellipse cx="3.2" cy="16.5" rx="5.2" ry="6" fill="#2a2d3d"/><ellipse cx="17" cy="21" rx="7" ry="3.6" fill="#2a2d3d"/><ellipse cx="21.3" cy="12.5" rx="1.5" ry="4.5" fill="#4a4d5a"/><ellipse cx="11.6" cy="6.6" rx="7.8" ry="6.2" fill="#8d5d3c"/><ellipse cx="3.9" cy="9.3" rx="1.7" ry="2.2" fill="#8f6a50"/><ellipse cx="11" cy="13.8" rx="6.2" ry="7.3" fill="#cf9c84"/><ellipse cx="13.8" cy="14.5" rx="3" ry="5.5" fill="#c48d76"/><ellipse cx="8" cy="10.6" rx="2.2" ry="3.4" fill="#ecd2bf"/><ellipse cx="11.2" cy="11.4" rx="3.6" ry="0.8" fill="#8e5f4e"/><ellipse cx="11.3" cy="16.8" rx="2.2" ry="0.8" fill="#a8705f"/><ellipse cx="19.2" cy="14" rx="1.45" ry="3.7" fill="#1fb0d6" transform="rotate(10 19.2 14)"/></g></g></svg>
<div class="t " style="left:1247.42px;top:408.00px;font-size:15.5px;line-height:19px;color:#1c2f52;letter-spacing:-0.759px;">Szakál Balázs</div>
<div class="abs tagb" style="left:1393.1px;top:406.00px;width:88.3px;border-color:#dcdfe4"></div>
<div class="t " style="left:1402.86px;top:409.40px;font-size:12.6px;line-height:20px;color:#172b4d;letter-spacing:0.497px;-webkit-text-stroke:0.35px #172b4d;">Exploratory</div>
<div class="abs tagb" style="left:1536px;top:406.00px;width:121.7px;border-color:#dcdfe4"></div>
<div class="t " style="left:1545.73px;top:408.90px;font-size:12.9px;line-height:20px;color:#172b4d;letter-spacing:0.544px;-webkit-text-stroke:0.35px #172b4d;">Not automatable</div>
<div class="abs" style="left:412px;top:438px;width:1845px;height:36px;background:#fff"></div>
<div class="abs hl" style="left:412px;top:473px;width:1845px"></div>
<div class="abs vl" style="left:455.0px;top:438px;height:36px"></div>
<div class="abs vl" style="left:499.0px;top:438px;height:36px"></div>
<div class="abs vl" style="left:620.7px;top:438px;height:36px"></div>
<div class="abs vl" style="left:972.5px;top:438px;height:36px"></div>
<div class="abs vl" style="left:1111.5px;top:438px;height:36px"></div>
<div class="abs vl" style="left:1210.5px;top:438px;height:36px"></div>
<div class="abs vl" style="left:1386.5px;top:438px;height:36px"></div>
<div class="abs vl" style="left:1529.5px;top:438px;height:36px"></div>
<span class="ic" style="left:424.2px;top:446.70px;width:17px;height:17px;color:#626f86"><svg width="17" height="17" viewBox="0 0 24 24" fill="none" stroke="currentColor" stroke-width="2" stroke-linecap="round" stroke-linejoin="round" ><circle cx="8.6" cy="5" r="2" fill="currentColor" stroke="none"/><circle cx="8.6" cy="12" r="2" fill="currentColor" stroke="none"/><circle cx="8.6" cy="19" r="2" fill="currentColor" stroke="none"/><circle cx="15.4" cy="5" r="2" fill="currentColor" stroke="none"/><circle cx="15.4" cy="12" r="2" fill="currentColor" stroke="none"/><circle cx="15.4" cy="19" r="2" fill="currentColor" stroke="none"/></svg></span>
<div class="abs cb" style="left:468px;top:446.80px"></div>
<div class="t " style="left:504.28px;top:445.20px;font-size:14px;line-height:20px;color:#172b4d;letter-spacing:-0.097px;font-family:'Liberation Mono',monospace;">KAN-TC-6</div>
<span class="ic" style="left:625.6px;top:444.80px;width:18.2px;height:18.2px;color:#1d6bf3"><svg width="18.2" height="18.2" viewBox="0 0 24 24" fill="none" stroke="currentColor" stroke-width="1.9" stroke-linecap="round" stroke-linejoin="round" ><path d="M15 2H6a2 2 0 0 0-2 2v16a2 2 0 0 0 2 2h12a2 2 0 0 0 2-2V7Z"/><path d="M14 2v4a2 2 0 0 0 2 2h4"/><path d="M10 9H8"/><path d="M16 13H8"/><path d="M16 17H8"/></svg></span>
<div class="t " style="left:652.65px;top:443.00px;font-size:15.2px;line-height:19px;color:#172b4d;letter-spacing:0.143px;-webkit-text-stroke:0.28px #172b4d;">Verify Durable Bronze Knife bypass</div>
<div class="abs" style="left:978.1px;top:442.70px;width:49.9px;height:22.05px;background:#dddee1;border-radius:3.5px"></div>
<div class="t " style="left:988.00px;top:444.70px;font-size:13.3px;line-height:20px;color:#44546f;letter-spacing:0.509px;-webkit-text-stroke:0.4px #44546f;">Draft</div>
<div class="abs bddb" style="left:1118.1px;top:442.20px"><span class="pick"></span></div>
<div class="t " style="left:1149.95px;top:445.60px;font-size:12.6px;line-height:20px;color:#1f845a;letter-spacing:-0.002px;-webkit-text-stroke:0.4px #1f845a;">BDD</div>
<div class="t " style="left:1217.35px;top:444.20px;font-size:15px;line-height:20px;color:#626f86;letter-spacing:0.000px;">-</div>
<div class="abs tagb" style="left:1393.1px;top:442.20px;width:88.3px;border-color:#dcdfe4"></div>
<div class="t " style="left:1402.86px;top:445.60px;font-size:12.6px;line-height:20px;color:#172b4d;letter-spacing:0.497px;-webkit-text-stroke:0.35px #172b4d;">Exploratory</div>
<div class="abs tagb" style="left:1536px;top:442.20px;width:63.6px;border-color:#dcdfe4"></div>
<div class="t " style="left:1545.73px;top:445.10px;font-size:12.9px;line-height:20px;color:#172b4d;letter-spacing:0.506px;-webkit-text-stroke:0.35px #172b4d;">Manual</div>
<div class="abs" style="left:412px;top:474px;width:1845px;height:36px;background:#fff"></div>
<div class="abs hl" style="left:412px;top:509px;width:1845px"></div>
<div class="abs vl" style="left:455.0px;top:474px;height:36px"></div>
<div class="abs vl" style="left:499.0px;top:474px;height:36px"></div>
<div class="abs vl" style="left:620.7px;top:474px;height:36px"></div>
<div class="abs vl" style="left:972.5px;top:474px;height:36px"></div>
<div class="abs vl" style="left:1111.5px;top:474px;height:36px"></div>
<div class="abs vl" style="left:1210.5px;top:474px;height:36px"></div>
<div class="abs vl" style="left:1386.5px;top:474px;height:36px"></div>
<div class="abs vl" style="left:1529.5px;top:474px;height:36px"></div>
<span class="ic" style="left:424.2px;top:482.90px;width:17px;height:17px;color:#626f86"><svg width="17" height="17" viewBox="0 0 24 24" fill="none" stroke="currentColor" stroke-width="2" stroke-linecap="round" stroke-linejoin="round" ><circle cx="8.6" cy="5" r="2" fill="currentColor" stroke="none"/><circle cx="8.6" cy="12" r="2" fill="currentColor" stroke="none"/><circle cx="8.6" cy="19" r="2" fill="currentColor" stroke="none"/><circle cx="15.4" cy="5" r="2" fill="currentColor" stroke="none"/><circle cx="15.4" cy="12" r="2" fill="currentColor" stroke="none"/><circle cx="15.4" cy="19" r="2" fill="currentColor" stroke="none"/></svg></span>
<div class="abs cb" style="left:468px;top:483.00px"></div>
<div class="t " style="left:504.28px;top:481.40px;font-size:14px;line-height:20px;color:#172b4d;letter-spacing:-0.097px;font-family:'Liberation Mono',monospace;">KAN-TC-8</div>
<span class="ic" style="left:625.6px;top:481.00px;width:18.2px;height:18.2px;color:#1d6bf3"><svg width="18.2" height="18.2" viewBox="0 0 24 24" fill="none" stroke="currentColor" stroke-width="1.9" stroke-linecap="round" stroke-linejoin="round" ><path d="M15 2H6a2 2 0 0 0-2 2v16a2 2 0 0 0 2 2h12a2 2 0 0 0 2-2V7Z"/><path d="M14 2v4a2 2 0 0 0 2 2h4"/><path d="M10 9H8"/><path d="M16 13H8"/><path d="M16 17H8"/></svg></span>
<div class="t " style="left:652.65px;top:479.00px;font-size:15.2px;line-height:19px;color:#172b4d;letter-spacing:0.174px;-webkit-text-stroke:0.28px #172b4d;">Verify Durable Concrete Shirt bypass</div>
<div class="abs" style="left:978.1px;top:478.90px;width:57.2px;height:22.05px;background:#b3df72;border-radius:3.5px"></div>
<div class="t " style="left:988.87px;top:481.40px;font-size:12.6px;line-height:20px;color:#172b4d;letter-spacing:0.452px;-webkit-text-stroke:0.4px #172b4d;">Active</div>
<div class="abs bddb" style="left:1118.1px;top:478.40px"><span class="pick"></span></div>
<div class="t " style="left:1149.95px;top:481.80px;font-size:12.6px;line-height:20px;color:#1f845a;letter-spacing:-0.002px;-webkit-text-stroke:0.4px #1f845a;">BDD</div>
<svg class="abs" style="left:1217.00px;top:478.30px" width="22" height="22" viewBox="0 0 22 22"><g clip-path="url(#cpB)"><g filter="url(#bl2)"><rect x="-2" y="-2" width="26" height="26" fill="#e6e7ea"/><ellipse cx="3.2" cy="16.5" rx="5.2" ry="6" fill="#2a2d3d"/><ellipse cx="17" cy="21" rx="7" ry="3.6" fill="#2a2d3d"/><ellipse cx="21.3" cy="12.5" rx="1.5" ry="4.5" fill="#4a4d5a"/><ellipse cx="11.6" cy="6.6" rx="7.8" ry="6.2" fill="#8d5d3c"/><ellipse cx="3.9" cy="9.3" rx="1.7" ry="2.2" fill="#8f6a50"/><ellipse cx="11" cy="13.8" rx="6.2" ry="7.3" fill="#cf9c84"/><ellipse cx="13.8" cy="14.5" rx="3" ry="5.5" fill="#c48d76"/><ellipse cx="8" cy="10.6" rx="2.2" ry="3.4" fill="#ecd2bf"/><ellipse cx="11.2" cy="11.4" rx="3.6" ry="0.8" fill="#8e5f4e"/><ellipse cx="11.3" cy="16.8" rx="2.2" ry="0.8" fill="#a8705f"/><ellipse cx="19.2" cy="14" rx="1.45" ry="3.7" fill="#1fb0d6" transform="rotate(10 19.2 14)"/></g></g></svg>
<div class="t " style="left:1247.42px;top:480.00px;font-size:15.5px;line-height:19px;color:#1c2f52;letter-spacing:-0.759px;">Szakál Balázs</div>
<div class="abs tagb" style="left:1393.1px;top:478.40px;width:81.6px;border-color:#dcdfe4"></div>
<div class="t " style="left:1402.86px;top:481.80px;font-size:12.6px;line-height:20px;color:#172b4d;letter-spacing:0.430px;-webkit-text-stroke:0.35px #172b4d;">Functional</div>
<div class="abs tagb" style="left:1536px;top:478.40px;width:120.7px;background:#ebecf0;border-color:#ebecf0"></div>
<div class="t " style="left:1546.57px;top:481.80px;font-size:12.6px;line-height:20px;color:#172b4d;letter-spacing:0.452px;-webkit-text-stroke:0.35px #172b4d;">To be automated</div>
<div class="abs" style="left:412px;top:510px;width:1845px;height:36px;background:#fff"></div>
<div class="abs hl" style="left:412px;top:545px;width:1845px"></div>
<div class="abs vl" style="left:455.0px;top:510px;height:36px"></div>
<div class="abs vl" style="left:499.0px;top:510px;height:36px"></div>
<div class="abs vl" style="left:620.7px;top:510px;height:36px"></div>
<div class="abs vl" style="left:972.5px;top:510px;height:36px"></div>
<div class="abs vl" style="left:1111.5px;top:510px;height:36px"></div>
<div class="abs vl" style="left:1210.5px;top:510px;height:36px"></div>
<div class="abs vl" style="left:1386.5px;top:510px;height:36px"></div>
<div class="abs vl" style="left:1529.5px;top:510px;height:36px"></div>
<span class="ic" style="left:424.2px;top:519.10px;width:17px;height:17px;color:#626f86"><svg width="17" height="17" viewBox="0 0 24 24" fill="none" stroke="currentColor" stroke-width="2" stroke-linecap="round" stroke-linejoin="round" ><circle cx="8.6" cy="5" r="2" fill="currentColor" stroke="none"/><circle cx="8.6" cy="12" r="2" fill="currentColor" stroke="none"/><circle cx="8.6" cy="19" r="2" fill="currentColor" stroke="none"/><circle cx="15.4" cy="5" r="2" fill="currentColor" stroke="none"/><circle cx="15.4" cy="12" r="2" fill="currentColor" stroke="none"/><circle cx="15.4" cy="19" r="2" fill="currentColor" stroke="none"/></svg></span>
<div class="abs cb" style="left:468px;top:519.20px"></div>
<div class="t " style="left:504.28px;top:517.60px;font-size:14px;line-height:20px;color:#172b4d;letter-spacing:-0.097px;font-family:'Liberation Mono',monospace;">KAN-TC-9</div>
<span class="ic" style="left:625.6px;top:517.20px;width:18.2px;height:18.2px;color:#1d6bf3"><svg width="18.2" height="18.2" viewBox="0 0 24 24" fill="none" stroke="currentColor" stroke-width="1.9" stroke-linecap="round" stroke-linejoin="round" ><path d="M15 2H6a2 2 0 0 0-2 2v16a2 2 0 0 0 2 2h12a2 2 0 0 0 2-2V7Z"/><path d="M14 2v4a2 2 0 0 0 2 2h4"/><path d="M10 9H8"/><path d="M16 13H8"/><path d="M16 17H8"/></svg></span>
<div class="t " style="left:652.65px;top:516.00px;font-size:15.2px;line-height:19px;color:#172b4d;letter-spacing:0.183px;-webkit-text-stroke:0.28px #172b4d;">Verify Enormous Linen Shoes input</div>
<div class="abs" style="left:978.1px;top:515.10px;width:76.9px;height:22.05px;background:#8fb8f6;border-radius:3.5px"></div>
<div class="t " style="left:988.05px;top:517.60px;font-size:12.6px;line-height:20px;color:#172b4d;letter-spacing:0.134px;-webkit-text-stroke:0.4px #172b4d;">In Review</div>
<div class="abs bddb" style="left:1118.1px;top:514.60px"><span class="pick"></span></div>
<div class="t " style="left:1149.95px;top:518.00px;font-size:12.6px;line-height:20px;color:#1f845a;letter-spacing:-0.002px;-webkit-text-stroke:0.4px #1f845a;">BDD</div>
<svg class="abs" style="left:1217.00px;top:514.50px" width="22" height="22" viewBox="0 0 22 22"><g clip-path="url(#cpB)"><g filter="url(#bl2)"><rect x="-2" y="-2" width="26" height="26" fill="#e6e7ea"/><ellipse cx="3.2" cy="16.5" rx="5.2" ry="6" fill="#2a2d3d"/><ellipse cx="17" cy="21" rx="7" ry="3.6" fill="#2a2d3d"/><ellipse cx="21.3" cy="12.5" rx="1.5" ry="4.5" fill="#4a4d5a"/><ellipse cx="11.6" cy="6.6" rx="7.8" ry="6.2" fill="#8d5d3c"/><ellipse cx="3.9" cy="9.3" rx="1.7" ry="2.2" fill="#8f6a50"/><ellipse cx="11" cy="13.8" rx="6.2" ry="7.3" fill="#cf9c84"/><ellipse cx="13.8" cy="14.5" rx="3" ry="5.5" fill="#c48d76"/><ellipse cx="8" cy="10.6" rx="2.2" ry="3.4" fill="#ecd2bf"/><ellipse cx="11.2" cy="11.4" rx="3.6" ry="0.8" fill="#8e5f4e"/><ellipse cx="11.3" cy="16.8" rx="2.2" ry="0.8" fill="#a8705f"/><ellipse cx="19.2" cy="14" rx="1.45" ry="3.7" fill="#1fb0d6" transform="rotate(10 19.2 14)"/></g></g></svg>
<div class="t " style="left:1247.42px;top:516.00px;font-size:15.5px;line-height:19px;color:#1c2f52;letter-spacing:-0.759px;">Szakál Balázs</div>
<div class="abs tagb" style="left:1393.1px;top:514.60px;width:59.6px;border-color:#dcdfe4"></div>
<div class="t " style="left:1403.17px;top:518.00px;font-size:12.6px;line-height:20px;color:#172b4d;letter-spacing:0.189px;-webkit-text-stroke:0.35px #172b4d;">Smoke</div>
<div class="abs tagb" style="left:1536px;top:514.60px;width:121.7px;border-color:#dcdfe4"></div>
<div class="t " style="left:1545.73px;top:517.50px;font-size:12.9px;line-height:20px;color:#172b4d;letter-spacing:0.544px;-webkit-text-stroke:0.35px #172b4d;">Not automatable</div>
<div class="abs" style="left:412px;top:546px;width:1845px;height:36px;background:#fff"></div>
<div class="abs hl" style="left:412px;top:581px;width:1845px"></div>
<div class="abs vl" style="left:455.0px;top:546px;height:36px"></div>
<div class="abs vl" style="left:499.0px;top:546px;height:36px"></div>
<div class="abs vl" style="left:620.7px;top:546px;height:36px"></div>
<div class="abs vl" style="left:972.5px;top:546px;height:36px"></div>
<div class="abs vl" style="left:1111.5px;top:546px;height:36px"></div>
<div class="abs vl" style="left:1210.5px;top:546px;height:36px"></div>
<div class="abs vl" style="left:1386.5px;top:546px;height:36px"></div>
<div class="abs vl" style="left:1529.5px;top:546px;height:36px"></div>
<span class="ic" style="left:424.2px;top:555.30px;width:17px;height:17px;color:#626f86"><svg width="17" height="17" viewBox="0 0 24 24" fill="none" stroke="currentColor" stroke-width="2" stroke-linecap="round" stroke-linejoin="round" ><circle cx="8.6" cy="5" r="2" fill="currentColor" stroke="none"/><circle cx="8.6" cy="12" r="2" fill="currentColor" stroke="none"/><circle cx="8.6" cy="19" r="2" fill="currentColor" stroke="none"/><circle cx="15.4" cy="5" r="2" fill="currentColor" stroke="none"/><circle cx="15.4" cy="12" r="2" fill="currentColor" stroke="none"/><circle cx="15.4" cy="19" r="2" fill="currentColor" stroke="none"/></svg></span>
<div class="abs cb" style="left:468px;top:555.40px"></div>
<div class="t " style="left:504.28px;top:553.80px;font-size:14px;line-height:20px;color:#172b4d;letter-spacing:-0.086px;font-family:'Liberation Mono',monospace;">KAN-TC-11</div>
<span class="ic" style="left:625.6px;top:553.40px;width:18.2px;height:18.2px;color:#1d6bf3"><svg width="18.2" height="18.2" viewBox="0 0 24 24" fill="none" stroke="currentColor" stroke-width="1.9" stroke-linecap="round" stroke-linejoin="round" ><path d="M15 2H6a2 2 0 0 0-2 2v16a2 2 0 0 0 2 2h12a2 2 0 0 0 2-2V7Z"/><path d="M14 2v4a2 2 0 0 0 2 2h4"/><path d="M10 9H8"/><path d="M16 13H8"/><path d="M16 17H8"/></svg></span>
<div class="t " style="left:652.65px;top:552.00px;font-size:15.2px;line-height:19px;color:#172b4d;letter-spacing:0.341px;-webkit-text-stroke:0.28px #172b4d;">Verify Small Cotton Watch quantify</div>
<div class="abs" style="left:978.1px;top:551.30px;width:121.9px;height:22.05px;background:#f8c84a;border-radius:3.5px"></div>
<div class="t " style="left:988.37px;top:553.80px;font-size:12.6px;line-height:20px;color:#172b4d;letter-spacing:0.256px;-webkit-text-stroke:0.4px #172b4d;">Changes Needed</div>
<div class="t " style="left:1217.35px;top:552.80px;font-size:15px;line-height:20px;color:#626f86;letter-spacing:0.000px;">-</div>
<div class="abs tagb" style="left:1393.1px;top:550.80px;width:95.6px;border-color:#dcdfe4"></div>
<div class="t " style="left:1402.86px;top:554.20px;font-size:12.6px;line-height:20px;color:#172b4d;letter-spacing:0.377px;-webkit-text-stroke:0.35px #172b4d;">Performance</div>
<div class="abs tagb" style="left:1536px;top:550.80px;width:86.9px;background:#0052cc;border-color:#0052cc"></div>
<div class="t " style="left:1546.47px;top:554.20px;font-size:12.6px;line-height:20px;color:#fff;letter-spacing:0.072px;font-weight:700;">Automated</div>
<div class="abs" style="left:412px;top:582px;width:1845px;height:37px;background:#fff"></div>
<div class="abs hl" style="left:412px;top:618px;width:1845px"></div>
<div class="abs vl" style="left:455.0px;top:582px;height:37px"></div>
<div class="abs vl" style="left:499.0px;top:582px;height:37px"></div>
<div class="abs vl" style="left:620.7px;top:582px;height:37px"></div>
<div class="abs vl" style="left:972.5px;top:582px;height:37px"></div>
<div class="abs vl" style="left:1111.5px;top:582px;height:37px"></div>
<div class="abs vl" style="left:1210.5px;top:582px;height:37px"></div>
<div class="abs vl" style="left:1386.5px;top:582px;height:37px"></div>
<div class="abs vl" style="left:1529.5px;top:582px;height:37px"></div>
<span class="ic" style="left:424.2px;top:591.50px;width:17px;height:17px;color:#626f86"><svg width="17" height="17" viewBox="0 0 24 24" fill="none" stroke="currentColor" stroke-width="2" stroke-linecap="round" stroke-linejoin="round" ><circle cx="8.6" cy="5" r="2" fill="currentColor" stroke="none"/><circle cx="8.6" cy="12" r="2" fill="currentColor" stroke="none"/><circle cx="8.6" cy="19" r="2" fill="currentColor" stroke="none"/><circle cx="15.4" cy="5" r="2" fill="currentColor" stroke="none"/><circle cx="15.4" cy="12" r="2" fill="currentColor" stroke="none"/><circle cx="15.4" cy="19" r="2" fill="currentColor" stroke="none"/></svg></span>
<div class="abs cb" style="left:468px;top:591.60px"></div>
<div class="t " style="left:504.28px;top:590.00px;font-size:14px;line-height:20px;color:#172b4d;letter-spacing:-0.086px;font-family:'Liberation Mono',monospace;">KAN-TC-12</div>
<span class="ic" style="left:625.6px;top:589.60px;width:18.2px;height:18.2px;color:#1d6bf3"><svg width="18.2" height="18.2" viewBox="0 0 24 24" fill="none" stroke="currentColor" stroke-width="1.9" stroke-linecap="round" stroke-linejoin="round" ><path d="M15 2H6a2 2 0 0 0-2 2v16a2 2 0 0 0 2 2h12a2 2 0 0 0 2-2V7Z"/><path d="M14 2v4a2 2 0 0 0 2 2h4"/><path d="M10 9H8"/><path d="M16 13H8"/><path d="M16 17H8"/></svg></span>
<div class="t " style="left:652.65px;top:588.00px;font-size:15.2px;line-height:19px;color:#172b4d;letter-spacing:0.305px;-webkit-text-stroke:0.28px #172b4d;">Verify Mediocre Plastic Hat program</div>
<div class="abs" style="left:978.1px;top:587.50px;width:57.2px;height:22.05px;background:#b3df72;border-radius:3.5px"></div>
<div class="t " style="left:988.87px;top:590.00px;font-size:12.6px;line-height:20px;color:#172b4d;letter-spacing:0.452px;-webkit-text-stroke:0.4px #172b4d;">Active</div>
<div class="abs bddb" style="left:1118.1px;top:587.00px"><span class="pick"></span></div>
<div class="t " style="left:1149.95px;top:590.40px;font-size:12.6px;line-height:20px;color:#1f845a;letter-spacing:-0.002px;-webkit-text-stroke:0.4px #1f845a;">BDD</div>
<div class="t " style="left:1217.35px;top:589.00px;font-size:15px;line-height:20px;color:#626f86;letter-spacing:0.000px;">-</div>
<div class="abs tagb" style="left:1393.1px;top:587.00px;width:88.3px;border-color:#dcdfe4"></div>
<div class="t " style="left:1402.86px;top:590.40px;font-size:12.6px;line-height:20px;color:#172b4d;letter-spacing:0.497px;-webkit-text-stroke:0.35px #172b4d;">Exploratory</div>
<div class="abs tagb" style="left:1536px;top:587.00px;width:121.7px;border-color:#dcdfe4"></div>
<div class="t " style="left:1545.73px;top:589.90px;font-size:12.9px;line-height:20px;color:#172b4d;letter-spacing:0.544px;-webkit-text-stroke:0.35px #172b4d;">Not automatable</div>
<div class="abs" style="left:412px;top:619px;width:1845px;height:36px;background:#fff"></div>
<div class="abs hl" style="left:412px;top:654px;width:1845px"></div>
<div class="abs vl" style="left:455.0px;top:619px;height:36px"></div>
<div class="abs vl" style="left:499.0px;top:619px;height:36px"></div>
<div class="abs vl" style="left:620.7px;top:619px;height:36px"></div>
<div class="abs vl" style="left:972.5px;top:619px;height:36px"></div>
<div class="abs vl" style="left:1111.5px;top:619px;height:36px"></div>
<div class="abs vl" style="left:1210.5px;top:619px;height:36px"></div>
<div class="abs vl" style="left:1386.5px;top:619px;height:36px"></div>
<div class="abs vl" style="left:1529.5px;top:619px;height:36px"></div>
<span class="ic" style="left:424.2px;top:627.70px;width:17px;height:17px;color:#626f86"><svg width="17" height="17" viewBox="0 0 24 24" fill="none" stroke="currentColor" stroke-width="2" stroke-linecap="round" stroke-linejoin="round" ><circle cx="8.6" cy="5" r="2" fill="currentColor" stroke="none"/><circle cx="8.6" cy="12" r="2" fill="currentColor" stroke="none"/><circle cx="8.6" cy="19" r="2" fill="currentColor" stroke="none"/><circle cx="15.4" cy="5" r="2" fill="currentColor" stroke="none"/><circle cx="15.4" cy="12" r="2" fill="currentColor" stroke="none"/><circle cx="15.4" cy="19" r="2" fill="currentColor" stroke="none"/></svg></span>
<div class="abs cb" style="left:468px;top:627.80px"></div>
<div class="t " style="left:504.28px;top:626.20px;font-size:14px;line-height:20px;color:#172b4d;letter-spacing:-0.086px;font-family:'Liberation Mono',monospace;">KAN-TC-13</div>
<span class="ic" style="left:625.6px;top:625.80px;width:18.2px;height:18.2px;color:#1d6bf3"><svg width="18.2" height="18.2" viewBox="0 0 24 24" fill="none" stroke="currentColor" stroke-width="1.9" stroke-linecap="round" stroke-linejoin="round" ><path d="M15 2H6a2 2 0 0 0-2 2v16a2 2 0 0 0 2 2h12a2 2 0 0 0 2-2V7Z"/><path d="M14 2v4a2 2 0 0 0 2 2h4"/><path d="M10 9H8"/><path d="M16 13H8"/><path d="M16 17H8"/></svg></span>
<div class="t " style="left:652.65px;top:624.00px;font-size:15.2px;line-height:19px;color:#172b4d;letter-spacing:0.249px;-webkit-text-stroke:0.28px #172b4d;">Verify Incredible Iron Bench copy</div>
<div class="abs" style="left:978.1px;top:623.70px;width:76.9px;height:22.05px;background:#8fb8f6;border-radius:3.5px"></div>
<div class="t " style="left:988.05px;top:626.20px;font-size:12.6px;line-height:20px;color:#172b4d;letter-spacing:0.134px;-webkit-text-stroke:0.4px #172b4d;">In Review</div>
<div class="abs bddb" style="left:1118.1px;top:623.20px"><span class="pick"></span></div>
<div class="t " style="left:1149.95px;top:626.60px;font-size:12.6px;line-height:20px;color:#1f845a;letter-spacing:-0.002px;-webkit-text-stroke:0.4px #1f845a;">BDD</div>
<svg class="abs" style="left:1217.00px;top:623.10px" width="22" height="22" viewBox="0 0 22 22"><g clip-path="url(#cpB)"><g filter="url(#bl2)"><rect x="-2" y="-2" width="26" height="26" fill="#e6e7ea"/><ellipse cx="3.2" cy="16.5" rx="5.2" ry="6" fill="#2a2d3d"/><ellipse cx="17" cy="21" rx="7" ry="3.6" fill="#2a2d3d"/><ellipse cx="21.3" cy="12.5" rx="1.5" ry="4.5" fill="#4a4d5a"/><ellipse cx="11.6" cy="6.6" rx="7.8" ry="6.2" fill="#8d5d3c"/><ellipse cx="3.9" cy="9.3" rx="1.7" ry="2.2" fill="#8f6a50"/><ellipse cx="11" cy="13.8" rx="6.2" ry="7.3" fill="#cf9c84"/><ellipse cx="13.8" cy="14.5" rx="3" ry="5.5" fill="#c48d76"/><ellipse cx="8" cy="10.6" rx="2.2" ry="3.4" fill="#ecd2bf"/><ellipse cx="11.2" cy="11.4" rx="3.6" ry="0.8" fill="#8e5f4e"/><ellipse cx="11.3" cy="16.8" rx="2.2" ry="0.8" fill="#a8705f"/><ellipse cx="19.2" cy="14" rx="1.45" ry="3.7" fill="#1fb0d6" transform="rotate(10 19.2 14)"/></g></g></svg>
<div class="t " style="left:1247.42px;top:625.00px;font-size:15.5px;line-height:19px;color:#1c2f52;letter-spacing:-0.759px;">Szakál Balázs</div>
<div class="abs tagb" style="left:1393.1px;top:623.20px;width:83.7px;border-color:#dcdfe4"></div>
<div class="t " style="left:1402.86px;top:626.60px;font-size:12.6px;line-height:20px;color:#172b4d;letter-spacing:0.097px;-webkit-text-stroke:0.35px #172b4d;">Regression</div>
<div class="abs tagb" style="left:1536px;top:623.20px;width:86.9px;background:#0052cc;border-color:#0052cc"></div>
<div class="t " style="left:1546.47px;top:626.60px;font-size:12.6px;line-height:20px;color:#fff;letter-spacing:0.072px;font-weight:700;">Automated</div>
<div class="abs" style="left:412px;top:655px;width:1845px;height:36px;background:#fafbfc"></div>
<div class="abs hl" style="left:412px;top:690px;width:1845px"></div>
<div class="abs vl" style="left:455.0px;top:655px;height:36px"></div>
<div class="abs vl" style="left:499.0px;top:655px;height:36px"></div>
<div class="abs vl" style="left:620.7px;top:655px;height:36px"></div>
<div class="abs vl" style="left:972.5px;top:655px;height:36px"></div>
<div class="abs vl" style="left:1111.5px;top:655px;height:36px"></div>
<div class="abs vl" style="left:1210.5px;top:655px;height:36px"></div>
<div class="abs vl" style="left:1386.5px;top:655px;height:36px"></div>
<div class="abs vl" style="left:1529.5px;top:655px;height:36px"></div>
<div class="abs" style="left:420px;top:659.50px;width:26px;height:26.3px;background:#e9ebee;border-radius:5px"></div>
<span class="ic" style="left:424.2px;top:663.90px;width:17px;height:17px;color:#b3b9c4"><svg width="17" height="17" viewBox="0 0 24 24" fill="none" stroke="currentColor" stroke-width="2" stroke-linecap="round" stroke-linejoin="round" ><circle cx="8.6" cy="5" r="2" fill="currentColor" stroke="none"/><circle cx="8.6" cy="12" r="2" fill="currentColor" stroke="none"/><circle cx="8.6" cy="19" r="2" fill="currentColor" stroke="none"/><circle cx="15.4" cy="5" r="2" fill="currentColor" stroke="none"/><circle cx="15.4" cy="12" r="2" fill="currentColor" stroke="none"/><circle cx="15.4" cy="19" r="2" fill="currentColor" stroke="none"/></svg></span>
<div class="abs cb on" style="left:468px;top:664.00px;background:#6b98e0;border-color:#6b98e0"><svg width="12" height="12" viewBox="0 0 24 24" fill="none" stroke="#fff" stroke-width="2.6" stroke-linecap="round" stroke-linejoin="round" ><path d="M20 6 9 17l-5-5"/></svg></div>
<div class="t " style="left:504.28px;top:662.40px;font-size:14px;line-height:20px;color:#8590a2;letter-spacing:-0.086px;font-family:'Liberation Mono',monospace;">KAN-TC-14</div>
<span class="ic" style="left:625.6px;top:662.00px;width:18.2px;height:18.2px;color:#8fb3f8"><svg width="18.2" height="18.2" viewBox="0 0 24 24" fill="none" stroke="currentColor" stroke-width="1.9" stroke-linecap="round" stroke-linejoin="round" ><path d="M15 2H6a2 2 0 0 0-2 2v16a2 2 0 0 0 2 2h12a2 2 0 0 0 2-2V7Z"/><path d="M14 2v4a2 2 0 0 0 2 2h4"/><path d="M10 9H8"/><path d="M16 13H8"/><path d="M16 17H8"/></svg></span>
<div class="t " style="left:652.65px;top:660.00px;font-size:15.2px;line-height:19px;color:#8590a2;letter-spacing:0.178px;-webkit-text-stroke:0.28px #8590a2;">Verify Sleek Linen Table program</div>
<div class="abs" style="left:978.1px;top:659.90px;width:121.9px;height:22.05px;background:#fbe1a0;border-radius:3.5px"></div>
<div class="t " style="left:988.37px;top:662.40px;font-size:12.6px;line-height:20px;color:#7d8698;letter-spacing:0.256px;-webkit-text-stroke:0.4px #7d8698;">Changes Needed</div>
<div class="abs bddb" style="left:1118.1px;top:659.40px;opacity:.45"><span class="pick"></span></div>
<div class="t " style="left:1149.95px;top:662.80px;font-size:12.6px;line-height:20px;color:#1f845a;letter-spacing:-0.002px;-webkit-text-stroke:0.4px #1f845a;opacity:.45">BDD</div>
<div class="t " style="left:1217.35px;top:661.40px;font-size:15px;line-height:20px;color:#b3b9c4;letter-spacing:0.000px;">-</div>
<div class="abs tagb" style="left:1393.1px;top:659.40px;width:59.6px;border-color:#e6e8ec;background:transparent"></div>
<div class="t " style="left:1403.17px;top:662.80px;font-size:12.6px;line-height:20px;color:#8590a2;letter-spacing:0.189px;-webkit-text-stroke:0.35px #8590a2;">Smoke</div>
<div class="abs tagb" style="left:1536px;top:659.40px;width:63.6px;border-color:#e6e8ec;background:transparent"></div>
<div class="t " style="left:1545.73px;top:662.30px;font-size:12.9px;line-height:20px;color:#8590a2;letter-spacing:0.506px;-webkit-text-stroke:0.35px #8590a2;">Manual</div>
<div class="abs" style="left:412px;top:691px;width:1845px;height:48px;background:#f4f5f7"></div>
<div class="abs hl" style="left:412px;top:738px;width:1845px"></div>
<div class="abs vl" style="left:455.0px;top:691px;height:35px"></div>
<div class="abs vl" style="left:499.0px;top:691px;height:35px"></div>
<div class="abs vl" style="left:620.7px;top:691px;height:48px"></div>
<div class="abs vl" style="left:972.5px;top:691px;height:48px"></div>
<div class="abs vl" style="left:1111.5px;top:691px;height:48px"></div>
<div class="abs vl" style="left:1210.5px;top:691px;height:48px"></div>
<div class="abs vl" style="left:1386.5px;top:691px;height:48px"></div>
<div class="abs vl" style="left:1529.5px;top:691px;height:48px"></div>
<span class="ic" style="left:424.2px;top:700.10px;width:17px;height:17px;color:#626f86"><svg width="17" height="17" viewBox="0 0 24 24" fill="none" stroke="currentColor" stroke-width="2" stroke-linecap="round" stroke-linejoin="round" ><circle cx="8.6" cy="5" r="2" fill="currentColor" stroke="none"/><circle cx="8.6" cy="12" r="2" fill="currentColor" stroke="none"/><circle cx="8.6" cy="19" r="2" fill="currentColor" stroke="none"/><circle cx="15.4" cy="5" r="2" fill="currentColor" stroke="none"/><circle cx="15.4" cy="12" r="2" fill="currentColor" stroke="none"/><circle cx="15.4" cy="19" r="2" fill="currentColor" stroke="none"/></svg></span>
<div class="abs cb on" style="left:468px;top:700.20px;background:#0052cc;border-color:#0052cc"><svg width="12" height="12" viewBox="0 0 24 24" fill="none" stroke="#fff" stroke-width="2.6" stroke-linecap="round" stroke-linejoin="round" ><path d="M20 6 9 17l-5-5"/></svg></div>
<div class="t " style="left:504.28px;top:698.60px;font-size:14px;line-height:20px;color:#172b4d;letter-spacing:-0.086px;font-family:'Liberation Mono',monospace;">KAN-TC-15</div>
<span class="ic" style="left:625.6px;top:698.20px;width:18.2px;height:18.2px;color:#1d6bf3"><svg width="18.2" height="18.2" viewBox="0 0 24 24" fill="none" stroke="currentColor" stroke-width="1.9" stroke-linecap="round" stroke-linejoin="round" ><path d="M15 2H6a2 2 0 0 0-2 2v16a2 2 0 0 0 2 2h12a2 2 0 0 0 2-2V7Z"/><path d="M14 2v4a2 2 0 0 0 2 2h4"/><path d="M10 9H8"/><path d="M16 13H8"/><path d="M16 17H8"/></svg></span>
<div class="t " style="left:652.65px;top:697.00px;font-size:15.2px;line-height:19px;color:#172b4d;letter-spacing:0.277px;-webkit-text-stroke:0.28px #172b4d;">Verify Fantastic Aluminum Keyboard</div>
<div class="t " style="left:652.03px;top:716.00px;font-size:15.3px;line-height:19px;color:#172b4d;letter-spacing:0.544px;-webkit-text-stroke:0.28px #172b4d;">program</div>
<div class="abs" style="left:978.1px;top:696.10px;width:49.9px;height:22.05px;background:#dddee1;border-radius:3.5px"></div>
<div class="t " style="left:988.00px;top:698.10px;font-size:13.3px;line-height:20px;color:#44546f;letter-spacing:0.509px;-webkit-text-stroke:0.4px #44546f;">Draft</div>
<div class="abs bddb" style="left:1118.1px;top:695.60px"><span class="pick"></span></div>
<div class="t " style="left:1149.95px;top:699.00px;font-size:12.6px;line-height:20px;color:#1f845a;letter-spacing:-0.002px;-webkit-text-stroke:0.4px #1f845a;">BDD</div>
<svg class="abs" style="left:1217.00px;top:695.50px" width="22" height="22" viewBox="0 0 22 22"><g clip-path="url(#cpB)"><g filter="url(#bl2)"><rect x="-2" y="-2" width="26" height="26" fill="#e6e7ea"/><ellipse cx="3.2" cy="16.5" rx="5.2" ry="6" fill="#2a2d3d"/><ellipse cx="17" cy="21" rx="7" ry="3.6" fill="#2a2d3d"/><ellipse cx="21.3" cy="12.5" rx="1.5" ry="4.5" fill="#4a4d5a"/><ellipse cx="11.6" cy="6.6" rx="7.8" ry="6.2" fill="#8d5d3c"/><ellipse cx="3.9" cy="9.3" rx="1.7" ry="2.2" fill="#8f6a50"/><ellipse cx="11" cy="13.8" rx="6.2" ry="7.3" fill="#cf9c84"/><ellipse cx="13.8" cy="14.5" rx="3" ry="5.5" fill="#c48d76"/><ellipse cx="8" cy="10.6" rx="2.2" ry="3.4" fill="#ecd2bf"/><ellipse cx="11.2" cy="11.4" rx="3.6" ry="0.8" fill="#8e5f4e"/><ellipse cx="11.3" cy="16.8" rx="2.2" ry="0.8" fill="#a8705f"/><ellipse cx="19.2" cy="14" rx="1.45" ry="3.7" fill="#1fb0d6" transform="rotate(10 19.2 14)"/></g></g></svg>
<div class="t " style="left:1247.42px;top:697.00px;font-size:15.5px;line-height:19px;color:#1c2f52;letter-spacing:-0.759px;">Szakál Balázs</div>
<div class="abs tagb" style="left:1393.1px;top:695.60px;width:59.6px;border-color:#dcdfe4;background:transparent"></div>
<div class="t " style="left:1403.17px;top:699.00px;font-size:12.6px;line-height:20px;color:#172b4d;letter-spacing:0.189px;-webkit-text-stroke:0.35px #172b4d;">Smoke</div>
<div class="abs tagb" style="left:1536px;top:695.60px;width:63.6px;border-color:#dcdfe4;background:transparent"></div>
<div class="t " style="left:1545.73px;top:698.50px;font-size:12.9px;line-height:20px;color:#172b4d;letter-spacing:0.506px;-webkit-text-stroke:0.35px #172b4d;">Manual</div>
<div class="abs" style="left:412px;top:739px;width:1845px;height:36px;background:#fff"></div>
<div class="abs hl" style="left:412px;top:774px;width:1845px"></div>
<div class="abs vl" style="left:455.0px;top:739px;height:36px"></div>
<div class="abs vl" style="left:499.0px;top:739px;height:36px"></div>
<div class="abs vl" style="left:620.7px;top:739px;height:36px"></div>
<div class="abs vl" style="left:972.5px;top:739px;height:36px"></div>
<div class="abs vl" style="left:1111.5px;top:739px;height:36px"></div>
<div class="abs vl" style="left:1210.5px;top:739px;height:36px"></div>
<div class="abs vl" style="left:1386.5px;top:739px;height:36px"></div>
<div class="abs vl" style="left:1529.5px;top:739px;height:36px"></div>
<span class="ic" style="left:424.2px;top:748.30px;width:17px;height:17px;color:#626f86"><svg width="17" height="17" viewBox="0 0 24 24" fill="none" stroke="currentColor" stroke-width="2" stroke-linecap="round" stroke-linejoin="round" ><circle cx="8.6" cy="5" r="2" fill="currentColor" stroke="none"/><circle cx="8.6" cy="12" r="2" fill="currentColor" stroke="none"/><circle cx="8.6" cy="19" r="2" fill="currentColor" stroke="none"/><circle cx="15.4" cy="5" r="2" fill="currentColor" stroke="none"/><circle cx="15.4" cy="12" r="2" fill="currentColor" stroke="none"/><circle cx="15.4" cy="19" r="2" fill="currentColor" stroke="none"/></svg></span>
<div class="abs cb" style="left:468px;top:748.40px"></div>
<div class="t " style="left:504.28px;top:746.80px;font-size:14px;line-height:20px;color:#172b4d;letter-spacing:-0.086px;font-family:'Liberation Mono',monospace;">KAN-TC-16</div>
<span class="ic" style="left:625.6px;top:746.40px;width:18.2px;height:18.2px;color:#1d6bf3"><svg width="18.2" height="18.2" viewBox="0 0 24 24" fill="none" stroke="currentColor" stroke-width="1.9" stroke-linecap="round" stroke-linejoin="round" ><path d="M15 2H6a2 2 0 0 0-2 2v16a2 2 0 0 0 2 2h12a2 2 0 0 0 2-2V7Z"/><path d="M14 2v4a2 2 0 0 0 2 2h4"/><path d="M10 9H8"/><path d="M16 13H8"/><path d="M16 17H8"/></svg></span>
<div class="t " style="left:652.65px;top:745.00px;font-size:15.2px;line-height:19px;color:#172b4d;letter-spacing:0.237px;-webkit-text-stroke:0.28px #172b4d;">Verify Practical Linen Table quantify</div>
<div class="abs" style="left:978.1px;top:744.30px;width:76.9px;height:22.05px;background:#8fb8f6;border-radius:3.5px"></div>
<div class="t " style="left:988.05px;top:746.80px;font-size:12.6px;line-height:20px;color:#172b4d;letter-spacing:0.134px;-webkit-text-stroke:0.4px #172b4d;">In Review</div>
<svg class="abs" style="left:1217.00px;top:743.70px" width="22" height="22" viewBox="0 0 22 22"><g clip-path="url(#cpB)"><g filter="url(#bl2)"><rect x="-2" y="-2" width="26" height="26" fill="#e6e7ea"/><ellipse cx="3.2" cy="16.5" rx="5.2" ry="6" fill="#2a2d3d"/><ellipse cx="17" cy="21" rx="7" ry="3.6" fill="#2a2d3d"/><ellipse cx="21.3" cy="12.5" rx="1.5" ry="4.5" fill="#4a4d5a"/><ellipse cx="11.6" cy="6.6" rx="7.8" ry="6.2" fill="#8d5d3c"/><ellipse cx="3.9" cy="9.3" rx="1.7" ry="2.2" fill="#8f6a50"/><ellipse cx="11" cy="13.8" rx="6.2" ry="7.3" fill="#cf9c84"/><ellipse cx="13.8" cy="14.5" rx="3" ry="5.5" fill="#c48d76"/><ellipse cx="8" cy="10.6" rx="2.2" ry="3.4" fill="#ecd2bf"/><ellipse cx="11.2" cy="11.4" rx="3.6" ry="0.8" fill="#8e5f4e"/><ellipse cx="11.3" cy="16.8" rx="2.2" ry="0.8" fill="#a8705f"/><ellipse cx="19.2" cy="14" rx="1.45" ry="3.7" fill="#1fb0d6" transform="rotate(10 19.2 14)"/></g></g></svg>
<div class="t " style="left:1247.42px;top:746.00px;font-size:15.5px;line-height:19px;color:#1c2f52;letter-spacing:-0.759px;">Szakál Balázs</div>
<div class="abs tagb" style="left:1393.1px;top:743.80px;width:70.7px;border-color:#dcdfe4"></div>
<div class="t " style="left:1402.86px;top:747.20px;font-size:12.6px;line-height:20px;color:#172b4d;letter-spacing:0.410px;-webkit-text-stroke:0.35px #172b4d;">Usability</div>
<div class="abs tagb" style="left:1536px;top:743.80px;width:121.7px;border-color:#dcdfe4"></div>
<div class="t " style="left:1545.73px;top:746.70px;font-size:12.9px;line-height:20px;color:#172b4d;letter-spacing:0.544px;-webkit-text-stroke:0.35px #172b4d;">Not automatable</div>
<div class="abs" style="left:412px;top:775px;width:1845px;height:37px;background:#fff"></div>
<div class="abs hl" style="left:412px;top:811px;width:1845px"></div>
<div class="abs vl" style="left:455.0px;top:775px;height:37px"></div>
<div class="abs vl" style="left:499.0px;top:775px;height:37px"></div>
<div class="abs vl" style="left:620.7px;top:775px;height:37px"></div>
<div class="abs vl" style="left:972.5px;top:775px;height:37px"></div>
<div class="abs vl" style="left:1111.5px;top:775px;height:37px"></div>
<div class="abs vl" style="left:1210.5px;top:775px;height:37px"></div>
<div class="abs vl" style="left:1386.5px;top:775px;height:37px"></div>
<div class="abs vl" style="left:1529.5px;top:775px;height:37px"></div>
<span class="ic" style="left:424.2px;top:784.50px;width:17px;height:17px;color:#626f86"><svg width="17" height="17" viewBox="0 0 24 24" fill="none" stroke="currentColor" stroke-width="2" stroke-linecap="round" stroke-linejoin="round" ><circle cx="8.6" cy="5" r="2" fill="currentColor" stroke="none"/><circle cx="8.6" cy="12" r="2" fill="currentColor" stroke="none"/><circle cx="8.6" cy="19" r="2" fill="currentColor" stroke="none"/><circle cx="15.4" cy="5" r="2" fill="currentColor" stroke="none"/><circle cx="15.4" cy="12" r="2" fill="currentColor" stroke="none"/><circle cx="15.4" cy="19" r="2" fill="currentColor" stroke="none"/></svg></span>
<div class="abs cb" style="left:468px;top:784.60px"></div>
<div class="t " style="left:504.28px;top:783.00px;font-size:14px;line-height:20px;color:#172b4d;letter-spacing:-0.086px;font-family:'Liberation Mono',monospace;">KAN-TC-17</div>
<span class="ic" style="left:625.6px;top:782.60px;width:18.2px;height:18.2px;color:#1d6bf3"><svg width="18.2" height="18.2" viewBox="0 0 24 24" fill="none" stroke="currentColor" stroke-width="1.9" stroke-linecap="round" stroke-linejoin="round" ><path d="M15 2H6a2 2 0 0 0-2 2v16a2 2 0 0 0 2 2h12a2 2 0 0 0 2-2V7Z"/><path d="M14 2v4a2 2 0 0 0 2 2h4"/><path d="M10 9H8"/><path d="M16 13H8"/><path d="M16 17H8"/></svg></span>
<div class="t " style="left:652.65px;top:781.00px;font-size:15.2px;line-height:19px;color:#172b4d;letter-spacing:0.208px;-webkit-text-stroke:0.28px #172b4d;">Verify Durable Steel Car input</div>
<div class="abs" style="left:978.1px;top:780.50px;width:76.9px;height:22.05px;background:#8fb8f6;border-radius:3.5px"></div>
<div class="t " style="left:988.05px;top:783.00px;font-size:12.6px;line-height:20px;color:#172b4d;letter-spacing:0.134px;-webkit-text-stroke:0.4px #172b4d;">In Review</div>
<div class="abs bddb" style="left:1118.1px;top:780.00px"><span class="pick"></span></div>
<div class="t " style="left:1149.95px;top:783.40px;font-size:12.6px;line-height:20px;color:#1f845a;letter-spacing:-0.002px;-webkit-text-stroke:0.4px #1f845a;">BDD</div>
<div class="t " style="left:1217.35px;top:782.00px;font-size:15px;line-height:20px;color:#626f86;letter-spacing:0.000px;">-</div>
<div class="abs tagb" style="left:1393.1px;top:780.00px;width:88.3px;border-color:#dcdfe4"></div>
<div class="t " style="left:1402.86px;top:783.40px;font-size:12.6px;line-height:20px;color:#172b4d;letter-spacing:0.497px;-webkit-text-stroke:0.35px #172b4d;">Exploratory</div>
<div class="abs tagb" style="left:1536px;top:780.00px;width:86.9px;background:#0052cc;border-color:#0052cc"></div>
<div class="t " style="left:1546.47px;top:783.40px;font-size:12.6px;line-height:20px;color:#fff;letter-spacing:0.072px;font-weight:700;">Automated</div>
<div class="abs" style="left:412px;top:812px;width:1845px;height:36px;background:#fff"></div>
<div class="abs hl" style="left:412px;top:847px;width:1845px"></div>
<div class="abs vl" style="left:455.0px;top:812px;height:36px"></div>
<div class="abs vl" style="left:499.0px;top:812px;height:36px"></div>
<div class="abs vl" style="left:620.7px;top:812px;height:36px"></div>
<div class="abs vl" style="left:972.5px;top:812px;height:36px"></div>
<div class="abs vl" style="left:1111.5px;top:812px;height:36px"></div>
<div class="abs vl" style="left:1210.5px;top:812px;height:36px"></div>
<div class="abs vl" style="left:1386.5px;top:812px;height:36px"></div>
<div class="abs vl" style="left:1529.5px;top:812px;height:36px"></div>
<span class="ic" style="left:424.2px;top:820.70px;width:17px;height:17px;color:#626f86"><svg width="17" height="17" viewBox="0 0 24 24" fill="none" stroke="currentColor" stroke-width="2" stroke-linecap="round" stroke-linejoin="round" ><circle cx="8.6" cy="5" r="2" fill="currentColor" stroke="none"/><circle cx="8.6" cy="12" r="2" fill="currentColor" stroke="none"/><circle cx="8.6" cy="19" r="2" fill="currentColor" stroke="none"/><circle cx="15.4" cy="5" r="2" fill="currentColor" stroke="none"/><circle cx="15.4" cy="12" r="2" fill="currentColor" stroke="none"/><circle cx="15.4" cy="19" r="2" fill="currentColor" stroke="none"/></svg></span>
<div class="abs cb" style="left:468px;top:820.80px"></div>
<div class="t " style="left:504.28px;top:819.20px;font-size:14px;line-height:20px;color:#172b4d;letter-spacing:-0.086px;font-family:'Liberation Mono',monospace;">KAN-TC-18</div>
<span class="ic" style="left:625.6px;top:818.80px;width:18.2px;height:18.2px;color:#1d6bf3"><svg width="18.2" height="18.2" viewBox="0 0 24 24" fill="none" stroke="currentColor" stroke-width="1.9" stroke-linecap="round" stroke-linejoin="round" ><path d="M15 2H6a2 2 0 0 0-2 2v16a2 2 0 0 0 2 2h12a2 2 0 0 0 2-2V7Z"/><path d="M14 2v4a2 2 0 0 0 2 2h4"/><path d="M10 9H8"/><path d="M16 13H8"/><path d="M16 17H8"/></svg></span>
<div class="t " style="left:652.65px;top:817.00px;font-size:15.2px;line-height:19px;color:#172b4d;letter-spacing:0.141px;-webkit-text-stroke:0.28px #172b4d;">Verify Enormous Paper Car override</div>
<div class="abs" style="left:978.1px;top:816.70px;width:121.9px;height:22.05px;background:#f8c84a;border-radius:3.5px"></div>
<div class="t " style="left:988.37px;top:819.20px;font-size:12.6px;line-height:20px;color:#172b4d;letter-spacing:0.256px;-webkit-text-stroke:0.4px #172b4d;">Changes Needed</div>
<svg class="abs" style="left:1217.00px;top:816.10px" width="22" height="22" viewBox="0 0 22 22"><g clip-path="url(#cpB)"><g filter="url(#bl2)"><rect x="-2" y="-2" width="26" height="26" fill="#e6e7ea"/><ellipse cx="3.2" cy="16.5" rx="5.2" ry="6" fill="#2a2d3d"/><ellipse cx="17" cy="21" rx="7" ry="3.6" fill="#2a2d3d"/><ellipse cx="21.3" cy="12.5" rx="1.5" ry="4.5" fill="#4a4d5a"/><ellipse cx="11.6" cy="6.6" rx="7.8" ry="6.2" fill="#8d5d3c"/><ellipse cx="3.9" cy="9.3" rx="1.7" ry="2.2" fill="#8f6a50"/><ellipse cx="11" cy="13.8" rx="6.2" ry="7.3" fill="#cf9c84"/><ellipse cx="13.8" cy="14.5" rx="3" ry="5.5" fill="#c48d76"/><ellipse cx="8" cy="10.6" rx="2.2" ry="3.4" fill="#ecd2bf"/><ellipse cx="11.2" cy="11.4" rx="3.6" ry="0.8" fill="#8e5f4e"/><ellipse cx="11.3" cy="16.8" rx="2.2" ry="0.8" fill="#a8705f"/><ellipse cx="19.2" cy="14" rx="1.45" ry="3.7" fill="#1fb0d6" transform="rotate(10 19.2 14)"/></g></g></svg>
<div class="t " style="left:1247.42px;top:818.00px;font-size:15.5px;line-height:19px;color:#1c2f52;letter-spacing:-0.759px;">Szakál Balázs</div>
<div class="abs tagb" style="left:1393.1px;top:816.20px;width:59.6px;border-color:#dcdfe4"></div>
<div class="t " style="left:1403.17px;top:819.60px;font-size:12.6px;line-height:20px;color:#172b4d;letter-spacing:0.189px;-webkit-text-stroke:0.35px #172b4d;">Smoke</div>
<div class="abs tagb" style="left:1536px;top:816.20px;width:120.7px;background:#ebecf0;border-color:#ebecf0"></div>
<div class="t " style="left:1546.57px;top:819.60px;font-size:12.6px;line-height:20px;color:#172b4d;letter-spacing:0.452px;-webkit-text-stroke:0.35px #172b4d;">To be automated</div>
<div class="abs" style="left:412px;top:848px;width:1845px;height:36px;background:#fff"></div>
<div class="abs hl" style="left:412px;top:883px;width:1845px"></div>
<div class="abs vl" style="left:455.0px;top:848px;height:36px"></div>
<div class="abs vl" style="left:499.0px;top:848px;height:36px"></div>
<div class="abs vl" style="left:620.7px;top:848px;height:36px"></div>
<div class="abs vl" style="left:972.5px;top:848px;height:36px"></div>
<div class="abs vl" style="left:1111.5px;top:848px;height:36px"></div>
<div class="abs vl" style="left:1210.5px;top:848px;height:36px"></div>
<div class="abs vl" style="left:1386.5px;top:848px;height:36px"></div>
<div class="abs vl" style="left:1529.5px;top:848px;height:36px"></div>
<span class="ic" style="left:424.2px;top:856.90px;width:17px;height:17px;color:#626f86"><svg width="17" height="17" viewBox="0 0 24 24" fill="none" stroke="currentColor" stroke-width="2" stroke-linecap="round" stroke-linejoin="round" ><circle cx="8.6" cy="5" r="2" fill="currentColor" stroke="none"/><circle cx="8.6" cy="12" r="2" fill="currentColor" stroke="none"/><circle cx="8.6" cy="19" r="2" fill="currentColor" stroke="none"/><circle cx="15.4" cy="5" r="2" fill="currentColor" stroke="none"/><circle cx="15.4" cy="12" r="2" fill="currentColor" stroke="none"/><circle cx="15.4" cy="19" r="2" fill="currentColor" stroke="none"/></svg></span>
<div class="abs cb" style="left:468px;top:857.00px"></div>
<div class="t " style="left:504.28px;top:855.40px;font-size:14px;line-height:20px;color:#172b4d;letter-spacing:-0.086px;font-family:'Liberation Mono',monospace;">KAN-TC-19</div>
<span class="ic" style="left:625.6px;top:855.00px;width:18.2px;height:18.2px;color:#1d6bf3"><svg width="18.2" height="18.2" viewBox="0 0 24 24" fill="none" stroke="currentColor" stroke-width="1.9" stroke-linecap="round" stroke-linejoin="round" ><path d="M15 2H6a2 2 0 0 0-2 2v16a2 2 0 0 0 2 2h12a2 2 0 0 0 2-2V7Z"/><path d="M14 2v4a2 2 0 0 0 2 2h4"/><path d="M10 9H8"/><path d="M16 13H8"/><path d="M16 17H8"/></svg></span>
<div class="t " style="left:652.65px;top:853.00px;font-size:15.2px;line-height:19px;color:#172b4d;letter-spacing:0.356px;-webkit-text-stroke:0.28px #172b4d;">Verify Aerodynamic Aluminum Table hack</div>
<div class="abs" style="left:978.1px;top:852.90px;width:76.9px;height:22.05px;background:#8fb8f6;border-radius:3.5px"></div>
<div class="t " style="left:988.05px;top:855.40px;font-size:12.6px;line-height:20px;color:#172b4d;letter-spacing:0.134px;-webkit-text-stroke:0.4px #172b4d;">In Review</div>
<svg class="abs" style="left:1217.00px;top:852.30px" width="22" height="22" viewBox="0 0 22 22"><g clip-path="url(#cpB)"><g filter="url(#bl2)"><rect x="-2" y="-2" width="26" height="26" fill="#e6e7ea"/><ellipse cx="3.2" cy="16.5" rx="5.2" ry="6" fill="#2a2d3d"/><ellipse cx="17" cy="21" rx="7" ry="3.6" fill="#2a2d3d"/><ellipse cx="21.3" cy="12.5" rx="1.5" ry="4.5" fill="#4a4d5a"/><ellipse cx="11.6" cy="6.6" rx="7.8" ry="6.2" fill="#8d5d3c"/><ellipse cx="3.9" cy="9.3" rx="1.7" ry="2.2" fill="#8f6a50"/><ellipse cx="11" cy="13.8" rx="6.2" ry="7.3" fill="#cf9c84"/><ellipse cx="13.8" cy="14.5" rx="3" ry="5.5" fill="#c48d76"/><ellipse cx="8" cy="10.6" rx="2.2" ry="3.4" fill="#ecd2bf"/><ellipse cx="11.2" cy="11.4" rx="3.6" ry="0.8" fill="#8e5f4e"/><ellipse cx="11.3" cy="16.8" rx="2.2" ry="0.8" fill="#a8705f"/><ellipse cx="19.2" cy="14" rx="1.45" ry="3.7" fill="#1fb0d6" transform="rotate(10 19.2 14)"/></g></g></svg>
<div class="t " style="left:1247.42px;top:854.00px;font-size:15.5px;line-height:19px;color:#1c2f52;letter-spacing:-0.759px;">Szakál Balázs</div>
<div class="abs tagb" style="left:1393.1px;top:852.40px;width:95.6px;border-color:#dcdfe4"></div>
<div class="t " style="left:1402.86px;top:855.80px;font-size:12.6px;line-height:20px;color:#172b4d;letter-spacing:0.377px;-webkit-text-stroke:0.35px #172b4d;">Performance</div>
<div class="abs tagb" style="left:1536px;top:852.40px;width:63.6px;border-color:#dcdfe4"></div>
<div class="t " style="left:1545.73px;top:855.30px;font-size:12.9px;line-height:20px;color:#172b4d;letter-spacing:0.506px;-webkit-text-stroke:0.35px #172b4d;">Manual</div>
<div class="abs" style="left:412px;top:884px;width:1845px;height:36px;background:#fff"></div>
<div class="abs hl" style="left:412px;top:919px;width:1845px"></div>
<div class="abs vl" style="left:455.0px;top:884px;height:36px"></div>
<div class="abs vl" style="left:499.0px;top:884px;height:36px"></div>
<div class="abs vl" style="left:620.7px;top:884px;height:36px"></div>
<div class="abs vl" style="left:972.5px;top:884px;height:36px"></div>
<div class="abs vl" style="left:1111.5px;top:884px;height:36px"></div>
<div class="abs vl" style="left:1210.5px;top:884px;height:36px"></div>
<div class="abs vl" style="left:1386.5px;top:884px;height:36px"></div>
<div class="abs vl" style="left:1529.5px;top:884px;height:36px"></div>
<span class="ic" style="left:424.2px;top:893.10px;width:17px;height:17px;color:#626f86"><svg width="17" height="17" viewBox="0 0 24 24" fill="none" stroke="currentColor" stroke-width="2" stroke-linecap="round" stroke-linejoin="round" ><circle cx="8.6" cy="5" r="2" fill="currentColor" stroke="none"/><circle cx="8.6" cy="12" r="2" fill="currentColor" stroke="none"/><circle cx="8.6" cy="19" r="2" fill="currentColor" stroke="none"/><circle cx="15.4" cy="5" r="2" fill="currentColor" stroke="none"/><circle cx="15.4" cy="12" r="2" fill="currentColor" stroke="none"/><circle cx="15.4" cy="19" r="2" fill="currentColor" stroke="none"/></svg></span>
<div class="abs cb" style="left:468px;top:893.20px"></div>
<div class="t " style="left:504.28px;top:891.60px;font-size:14px;line-height:20px;color:#172b4d;letter-spacing:-0.086px;font-family:'Liberation Mono',monospace;">KAN-TC-20</div>
<span class="ic" style="left:625.6px;top:891.20px;width:18.2px;height:18.2px;color:#1d6bf3"><svg width="18.2" height="18.2" viewBox="0 0 24 24" fill="none" stroke="currentColor" stroke-width="1.9" stroke-linecap="round" stroke-linejoin="round" ><path d="M15 2H6a2 2 0 0 0-2 2v16a2 2 0 0 0 2 2h12a2 2 0 0 0 2-2V7Z"/><path d="M14 2v4a2 2 0 0 0 2 2h4"/><path d="M10 9H8"/><path d="M16 13H8"/><path d="M16 17H8"/></svg></span>
<div class="t " style="left:652.65px;top:890.00px;font-size:15.2px;line-height:19px;color:#172b4d;letter-spacing:0.194px;-webkit-text-stroke:0.28px #172b4d;">Verify Awesome Steel Wallet calculate</div>
<div class="abs" style="left:978.1px;top:889.10px;width:76.9px;height:22.05px;background:#8fb8f6;border-radius:3.5px"></div>
<div class="t " style="left:988.05px;top:891.60px;font-size:12.6px;line-height:20px;color:#172b4d;letter-spacing:0.134px;-webkit-text-stroke:0.4px #172b4d;">In Review</div>
<div class="abs bddb" style="left:1118.1px;top:888.60px"><span class="pick"></span></div>
<div class="t " style="left:1149.95px;top:892.00px;font-size:12.6px;line-height:20px;color:#1f845a;letter-spacing:-0.002px;-webkit-text-stroke:0.4px #1f845a;">BDD</div>
<svg class="abs" style="left:1217.00px;top:888.50px" width="22" height="22" viewBox="0 0 22 22"><g clip-path="url(#cpB)"><g filter="url(#bl2)"><rect x="-2" y="-2" width="26" height="26" fill="#e6e7ea"/><ellipse cx="3.2" cy="16.5" rx="5.2" ry="6" fill="#2a2d3d"/><ellipse cx="17" cy="21" rx="7" ry="3.6" fill="#2a2d3d"/><ellipse cx="21.3" cy="12.5" rx="1.5" ry="4.5" fill="#4a4d5a"/><ellipse cx="11.6" cy="6.6" rx="7.8" ry="6.2" fill="#8d5d3c"/><ellipse cx="3.9" cy="9.3" rx="1.7" ry="2.2" fill="#8f6a50"/><ellipse cx="11" cy="13.8" rx="6.2" ry="7.3" fill="#cf9c84"/><ellipse cx="13.8" cy="14.5" rx="3" ry="5.5" fill="#c48d76"/><ellipse cx="8" cy="10.6" rx="2.2" ry="3.4" fill="#ecd2bf"/><ellipse cx="11.2" cy="11.4" rx="3.6" ry="0.8" fill="#8e5f4e"/><ellipse cx="11.3" cy="16.8" rx="2.2" ry="0.8" fill="#a8705f"/><ellipse cx="19.2" cy="14" rx="1.45" ry="3.7" fill="#1fb0d6" transform="rotate(10 19.2 14)"/></g></g></svg>
<div class="t " style="left:1247.42px;top:890.00px;font-size:15.5px;line-height:19px;color:#1c2f52;letter-spacing:-0.759px;">Szakál Balázs</div>
<div class="abs tagb" style="left:1393.1px;top:888.60px;width:70.7px;border-color:#dcdfe4"></div>
<div class="t " style="left:1402.86px;top:892.00px;font-size:12.6px;line-height:20px;color:#172b4d;letter-spacing:0.410px;-webkit-text-stroke:0.35px #172b4d;">Usability</div>
<div class="abs tagb" style="left:1536px;top:888.60px;width:120.7px;background:#ebecf0;border-color:#ebecf0"></div>
<div class="t " style="left:1546.57px;top:892.00px;font-size:12.6px;line-height:20px;color:#172b4d;letter-spacing:0.452px;-webkit-text-stroke:0.35px #172b4d;">To be automated</div>
<div class="abs" style="left:412px;top:920px;width:1845px;height:36px;background:#fff"></div>
<div class="abs hl" style="left:412px;top:955px;width:1845px"></div>
<div class="abs vl" style="left:455.0px;top:920px;height:36px"></div>
<div class="abs vl" style="left:499.0px;top:920px;height:36px"></div>
<div class="abs vl" style="left:620.7px;top:920px;height:36px"></div>
<div class="abs vl" style="left:972.5px;top:920px;height:36px"></div>
<div class="abs vl" style="left:1111.5px;top:920px;height:36px"></div>
<div class="abs vl" style="left:1210.5px;top:920px;height:36px"></div>
<div class="abs vl" style="left:1386.5px;top:920px;height:36px"></div>
<div class="abs vl" style="left:1529.5px;top:920px;height:36px"></div>
<span class="ic" style="left:424.2px;top:929.30px;width:17px;height:17px;color:#626f86"><svg width="17" height="17" viewBox="0 0 24 24" fill="none" stroke="currentColor" stroke-width="2" stroke-linecap="round" stroke-linejoin="round" ><circle cx="8.6" cy="5" r="2" fill="currentColor" stroke="none"/><circle cx="8.6" cy="12" r="2" fill="currentColor" stroke="none"/><circle cx="8.6" cy="19" r="2" fill="currentColor" stroke="none"/><circle cx="15.4" cy="5" r="2" fill="currentColor" stroke="none"/><circle cx="15.4" cy="12" r="2" fill="currentColor" stroke="none"/><circle cx="15.4" cy="19" r="2" fill="currentColor" stroke="none"/></svg></span>
<div class="abs cb" style="left:468px;top:929.40px"></div>
<div class="t " style="left:504.28px;top:927.80px;font-size:14px;line-height:20px;color:#172b4d;letter-spacing:-0.086px;font-family:'Liberation Mono',monospace;">KAN-TC-22</div>
<span class="ic" style="left:625.6px;top:927.40px;width:18.2px;height:18.2px;color:#1d6bf3"><svg width="18.2" height="18.2" viewBox="0 0 24 24" fill="none" stroke="currentColor" stroke-width="1.9" stroke-linecap="round" stroke-linejoin="round" ><path d="M15 2H6a2 2 0 0 0-2 2v16a2 2 0 0 0 2 2h12a2 2 0 0 0 2-2V7Z"/><path d="M14 2v4a2 2 0 0 0 2 2h4"/><path d="M10 9H8"/><path d="M16 13H8"/><path d="M16 17H8"/></svg></span>
<div class="t " style="left:652.65px;top:926.00px;font-size:15.2px;line-height:19px;color:#172b4d;letter-spacing:0.162px;-webkit-text-stroke:0.28px #172b4d;">Verify Sleek Steel Keyboard input</div>
<div class="abs" style="left:978.1px;top:925.30px;width:57.2px;height:22.05px;background:#b3df72;border-radius:3.5px"></div>
<div class="t " style="left:988.87px;top:927.80px;font-size:12.6px;line-height:20px;color:#172b4d;letter-spacing:0.452px;-webkit-text-stroke:0.4px #172b4d;">Active</div>
<svg class="abs" style="left:1217.00px;top:924.70px" width="22" height="22" viewBox="0 0 22 22"><g clip-path="url(#cpB)"><g filter="url(#bl2)"><rect x="-2" y="-2" width="26" height="26" fill="#e6e7ea"/><ellipse cx="3.2" cy="16.5" rx="5.2" ry="6" fill="#2a2d3d"/><ellipse cx="17" cy="21" rx="7" ry="3.6" fill="#2a2d3d"/><ellipse cx="21.3" cy="12.5" rx="1.5" ry="4.5" fill="#4a4d5a"/><ellipse cx="11.6" cy="6.6" rx="7.8" ry="6.2" fill="#8d5d3c"/><ellipse cx="3.9" cy="9.3" rx="1.7" ry="2.2" fill="#8f6a50"/><ellipse cx="11" cy="13.8" rx="6.2" ry="7.3" fill="#cf9c84"/><ellipse cx="13.8" cy="14.5" rx="3" ry="5.5" fill="#c48d76"/><ellipse cx="8" cy="10.6" rx="2.2" ry="3.4" fill="#ecd2bf"/><ellipse cx="11.2" cy="11.4" rx="3.6" ry="0.8" fill="#8e5f4e"/><ellipse cx="11.3" cy="16.8" rx="2.2" ry="0.8" fill="#a8705f"/><ellipse cx="19.2" cy="14" rx="1.45" ry="3.7" fill="#1fb0d6" transform="rotate(10 19.2 14)"/></g></g></svg>
<div class="t " style="left:1247.42px;top:927.00px;font-size:15.5px;line-height:19px;color:#1c2f52;letter-spacing:-0.759px;">Szakál Balázs</div>
<div class="abs tagb" style="left:1393.1px;top:924.80px;width:68.2px;border-color:#dcdfe4"></div>
<div class="t " style="left:1403.17px;top:928.20px;font-size:12.6px;line-height:20px;color:#172b4d;letter-spacing:0.365px;-webkit-text-stroke:0.35px #172b4d;">Security</div>
<div class="abs tagb" style="left:1536px;top:924.80px;width:63.6px;border-color:#dcdfe4"></div>
<div class="t " style="left:1545.73px;top:927.70px;font-size:12.9px;line-height:20px;color:#172b4d;letter-spacing:0.506px;-webkit-text-stroke:0.35px #172b4d;">Manual</div>
<div class="abs" style="left:412px;top:956px;width:1845px;height:37px;background:#fff"></div>
<div class="abs hl" style="left:412px;top:992px;width:1845px"></div>
<div class="abs vl" style="left:455.0px;top:956px;height:37px"></div>
<div class="abs vl" style="left:499.0px;top:956px;height:37px"></div>
<div class="abs vl" style="left:620.7px;top:956px;height:37px"></div>
<div class="abs vl" style="left:972.5px;top:956px;height:37px"></div>
<div class="abs vl" style="left:1111.5px;top:956px;height:37px"></div>
<div class="abs vl" style="left:1210.5px;top:956px;height:37px"></div>
<div class="abs vl" style="left:1386.5px;top:956px;height:37px"></div>
<div class="abs vl" style="left:1529.5px;top:956px;height:37px"></div>
<span class="ic" style="left:424.2px;top:965.50px;width:17px;height:17px;color:#626f86"><svg width="17" height="17" viewBox="0 0 24 24" fill="none" stroke="currentColor" stroke-width="2" stroke-linecap="round" stroke-linejoin="round" ><circle cx="8.6" cy="5" r="2" fill="currentColor" stroke="none"/><circle cx="8.6" cy="12" r="2" fill="currentColor" stroke="none"/><circle cx="8.6" cy="19" r="2" fill="currentColor" stroke="none"/><circle cx="15.4" cy="5" r="2" fill="currentColor" stroke="none"/><circle cx="15.4" cy="12" r="2" fill="currentColor" stroke="none"/><circle cx="15.4" cy="19" r="2" fill="currentColor" stroke="none"/></svg></span>
<div class="abs cb" style="left:468px;top:965.60px"></div>
<div class="t " style="left:504.28px;top:964.00px;font-size:14px;line-height:20px;color:#172b4d;letter-spacing:-0.086px;font-family:'Liberation Mono',monospace;">KAN-TC-23</div>
<span class="ic" style="left:625.6px;top:963.60px;width:18.2px;height:18.2px;color:#1d6bf3"><svg width="18.2" height="18.2" viewBox="0 0 24 24" fill="none" stroke="currentColor" stroke-width="1.9" stroke-linecap="round" stroke-linejoin="round" ><path d="M15 2H6a2 2 0 0 0-2 2v16a2 2 0 0 0 2 2h12a2 2 0 0 0 2-2V7Z"/><path d="M14 2v4a2 2 0 0 0 2 2h4"/><path d="M10 9H8"/><path d="M16 13H8"/><path d="M16 17H8"/></svg></span>
<div class="t " style="left:652.65px;top:962.00px;font-size:15.2px;line-height:19px;color:#172b4d;letter-spacing:0.247px;-webkit-text-stroke:0.28px #172b4d;">Verify Incredible Silk Knife navigate</div>
<div class="abs" style="left:978.1px;top:961.50px;width:49.9px;height:22.05px;background:#dddee1;border-radius:3.5px"></div>
<div class="t " style="left:988.00px;top:963.50px;font-size:13.3px;line-height:20px;color:#44546f;letter-spacing:0.509px;-webkit-text-stroke:0.4px #44546f;">Draft</div>
<div class="abs bddb" style="left:1118.1px;top:961.00px"><span class="pick"></span></div>
<div class="t " style="left:1149.95px;top:964.40px;font-size:12.6px;line-height:20px;color:#1f845a;letter-spacing:-0.002px;-webkit-text-stroke:0.4px #1f845a;">BDD</div>
<div class="t " style="left:1217.35px;top:963.00px;font-size:15px;line-height:20px;color:#626f86;letter-spacing:0.000px;">-</div>
<div class="abs tagb" style="left:1393.1px;top:961.00px;width:95.6px;border-color:#dcdfe4"></div>
<div class="t " style="left:1402.86px;top:964.40px;font-size:12.6px;line-height:20px;color:#172b4d;letter-spacing:0.377px;-webkit-text-stroke:0.35px #172b4d;">Performance</div>
<div class="abs tagb" style="left:1536px;top:961.00px;width:86.9px;background:#0052cc;border-color:#0052cc"></div>
<div class="t " style="left:1546.47px;top:964.40px;font-size:12.6px;line-height:20px;color:#fff;letter-spacing:0.072px;font-weight:700;">Automated</div>
<div class="abs" style="left:412px;top:993px;width:1845px;height:36px;background:#fff"></div>
<div class="abs hl" style="left:412px;top:1028px;width:1845px"></div>
<div class="abs vl" style="left:455.0px;top:993px;height:36px"></div>
<div class="abs vl" style="left:499.0px;top:993px;height:36px"></div>
<div class="abs vl" style="left:620.7px;top:993px;height:36px"></div>
<div class="abs vl" style="left:972.5px;top:993px;height:36px"></div>
<div class="abs vl" style="left:1111.5px;top:993px;height:36px"></div>
<div class="abs vl" style="left:1210.5px;top:993px;height:36px"></div>
<div class="abs vl" style="left:1386.5px;top:993px;height:36px"></div>
<div class="abs vl" style="left:1529.5px;top:993px;height:36px"></div>
<span class="ic" style="left:424.2px;top:1001.70px;width:17px;height:17px;color:#626f86"><svg width="17" height="17" viewBox="0 0 24 24" fill="none" stroke="currentColor" stroke-width="2" stroke-linecap="round" stroke-linejoin="round" ><circle cx="8.6" cy="5" r="2" fill="currentColor" stroke="none"/><circle cx="8.6" cy="12" r="2" fill="currentColor" stroke="none"/><circle cx="8.6" cy="19" r="2" fill="currentColor" stroke="none"/><circle cx="15.4" cy="5" r="2" fill="currentColor" stroke="none"/><circle cx="15.4" cy="12" r="2" fill="currentColor" stroke="none"/><circle cx="15.4" cy="19" r="2" fill="currentColor" stroke="none"/></svg></span>
<div class="abs cb" style="left:468px;top:1001.80px"></div>
<div class="t " style="left:504.28px;top:1000.20px;font-size:14px;line-height:20px;color:#172b4d;letter-spacing:-0.086px;font-family:'Liberation Mono',monospace;">KAN-TC-24</div>
<span class="ic" style="left:625.6px;top:999.80px;width:18.2px;height:18.2px;color:#1d6bf3"><svg width="18.2" height="18.2" viewBox="0 0 24 24" fill="none" stroke="currentColor" stroke-width="1.9" stroke-linecap="round" stroke-linejoin="round" ><path d="M15 2H6a2 2 0 0 0-2 2v16a2 2 0 0 0 2 2h12a2 2 0 0 0 2-2V7Z"/><path d="M14 2v4a2 2 0 0 0 2 2h4"/><path d="M10 9H8"/><path d="M16 13H8"/><path d="M16 17H8"/></svg></span>
<div class="t " style="left:652.65px;top:998.00px;font-size:15.2px;line-height:19px;color:#172b4d;letter-spacing:0.297px;-webkit-text-stroke:0.28px #172b4d;">Verify Incredible Rubber Clock quantify</div>
<div class="abs" style="left:978.1px;top:997.70px;width:49.9px;height:22.05px;background:#dddee1;border-radius:3.5px"></div>
<div class="t " style="left:988.00px;top:999.70px;font-size:13.3px;line-height:20px;color:#44546f;letter-spacing:0.509px;-webkit-text-stroke:0.4px #44546f;">Draft</div>
<div class="abs bddb" style="left:1118.1px;top:997.20px"><span class="pick"></span></div>
<div class="t " style="left:1149.95px;top:1000.60px;font-size:12.6px;line-height:20px;color:#1f845a;letter-spacing:-0.002px;-webkit-text-stroke:0.4px #1f845a;">BDD</div>
<svg class="abs" style="left:1217.00px;top:997.10px" width="22" height="22" viewBox="0 0 22 22"><g clip-path="url(#cpB)"><g filter="url(#bl2)"><rect x="-2" y="-2" width="26" height="26" fill="#e6e7ea"/><ellipse cx="3.2" cy="16.5" rx="5.2" ry="6" fill="#2a2d3d"/><ellipse cx="17" cy="21" rx="7" ry="3.6" fill="#2a2d3d"/><ellipse cx="21.3" cy="12.5" rx="1.5" ry="4.5" fill="#4a4d5a"/><ellipse cx="11.6" cy="6.6" rx="7.8" ry="6.2" fill="#8d5d3c"/><ellipse cx="3.9" cy="9.3" rx="1.7" ry="2.2" fill="#8f6a50"/><ellipse cx="11" cy="13.8" rx="6.2" ry="7.3" fill="#cf9c84"/><ellipse cx="13.8" cy="14.5" rx="3" ry="5.5" fill="#c48d76"/><ellipse cx="8" cy="10.6" rx="2.2" ry="3.4" fill="#ecd2bf"/><ellipse cx="11.2" cy="11.4" rx="3.6" ry="0.8" fill="#8e5f4e"/><ellipse cx="11.3" cy="16.8" rx="2.2" ry="0.8" fill="#a8705f"/><ellipse cx="19.2" cy="14" rx="1.45" ry="3.7" fill="#1fb0d6" transform="rotate(10 19.2 14)"/></g></g></svg>
<div class="t " style="left:1247.42px;top:999.00px;font-size:15.5px;line-height:19px;color:#1c2f52;letter-spacing:-0.759px;">Szakál Balázs</div>
<div class="abs tagb" style="left:1393.1px;top:997.20px;width:68.2px;border-color:#dcdfe4"></div>
<div class="t " style="left:1403.17px;top:1000.60px;font-size:12.6px;line-height:20px;color:#172b4d;letter-spacing:0.365px;-webkit-text-stroke:0.35px #172b4d;">Security</div>
<div class="abs tagb" style="left:1536px;top:997.20px;width:63.6px;border-color:#dcdfe4"></div>
<div class="t " style="left:1545.73px;top:1000.10px;font-size:12.9px;line-height:20px;color:#172b4d;letter-spacing:0.506px;-webkit-text-stroke:0.35px #172b4d;">Manual</div>
<div class="abs" style="left:412px;top:1029px;width:1845px;height:36px;background:#fff"></div>
<div class="abs hl" style="left:412px;top:1064px;width:1845px"></div>
<div class="abs vl" style="left:455.0px;top:1029px;height:36px"></div>
<div class="abs vl" style="left:499.0px;top:1029px;height:36px"></div>
<div class="abs vl" style="left:620.7px;top:1029px;height:36px"></div>
<div class="abs vl" style="left:972.5px;top:1029px;height:36px"></div>
<div class="abs vl" style="left:1111.5px;top:1029px;height:36px"></div>
<div class="abs vl" style="left:1210.5px;top:1029px;height:36px"></div>
<div class="abs vl" style="left:1386.5px;top:1029px;height:36px"></div>
<div class="abs vl" style="left:1529.5px;top:1029px;height:36px"></div>
<span class="ic" style="left:424.2px;top:1037.90px;width:17px;height:17px;color:#626f86"><svg width="17" height="17" viewBox="0 0 24 24" fill="none" stroke="currentColor" stroke-width="2" stroke-linecap="round" stroke-linejoin="round" ><circle cx="8.6" cy="5" r="2" fill="currentColor" stroke="none"/><circle cx="8.6" cy="12" r="2" fill="currentColor" stroke="none"/><circle cx="8.6" cy="19" r="2" fill="currentColor" stroke="none"/><circle cx="15.4" cy="5" r="2" fill="currentColor" stroke="none"/><circle cx="15.4" cy="12" r="2" fill="currentColor" stroke="none"/><circle cx="15.4" cy="19" r="2" fill="currentColor" stroke="none"/></svg></span>
<div class="abs cb" style="left:468px;top:1038.00px"></div>
<div class="t " style="left:504.28px;top:1036.40px;font-size:14px;line-height:20px;color:#172b4d;letter-spacing:-0.086px;font-family:'Liberation Mono',monospace;">KAN-TC-25</div>
<span class="ic" style="left:625.6px;top:1036.00px;width:18.2px;height:18.2px;color:#1d6bf3"><svg width="18.2" height="18.2" viewBox="0 0 24 24" fill="none" stroke="currentColor" stroke-width="1.9" stroke-linecap="round" stroke-linejoin="round" ><path d="M15 2H6a2 2 0 0 0-2 2v16a2 2 0 0 0 2 2h12a2 2 0 0 0 2-2V7Z"/><path d="M14 2v4a2 2 0 0 0 2 2h4"/><path d="M10 9H8"/><path d="M16 13H8"/><path d="M16 17H8"/></svg></span>
<div class="t " style="left:652.65px;top:1034.00px;font-size:15.2px;line-height:19px;color:#172b4d;letter-spacing:0.289px;-webkit-text-stroke:0.28px #172b4d;">Verify Durable Granite Coat input</div>
<div class="abs" style="left:978.1px;top:1033.90px;width:76.9px;height:22.05px;background:#8fb8f6;border-radius:3.5px"></div>
<div class="t " style="left:988.05px;top:1036.40px;font-size:12.6px;line-height:20px;color:#172b4d;letter-spacing:0.134px;-webkit-text-stroke:0.4px #172b4d;">In Review</div>
<svg class="abs" style="left:1217.00px;top:1033.30px" width="22" height="22" viewBox="0 0 22 22"><g clip-path="url(#cpB)"><g filter="url(#bl2)"><rect x="-2" y="-2" width="26" height="26" fill="#e6e7ea"/><ellipse cx="3.2" cy="16.5" rx="5.2" ry="6" fill="#2a2d3d"/><ellipse cx="17" cy="21" rx="7" ry="3.6" fill="#2a2d3d"/><ellipse cx="21.3" cy="12.5" rx="1.5" ry="4.5" fill="#4a4d5a"/><ellipse cx="11.6" cy="6.6" rx="7.8" ry="6.2" fill="#8d5d3c"/><ellipse cx="3.9" cy="9.3" rx="1.7" ry="2.2" fill="#8f6a50"/><ellipse cx="11" cy="13.8" rx="6.2" ry="7.3" fill="#cf9c84"/><ellipse cx="13.8" cy="14.5" rx="3" ry="5.5" fill="#c48d76"/><ellipse cx="8" cy="10.6" rx="2.2" ry="3.4" fill="#ecd2bf"/><ellipse cx="11.2" cy="11.4" rx="3.6" ry="0.8" fill="#8e5f4e"/><ellipse cx="11.3" cy="16.8" rx="2.2" ry="0.8" fill="#a8705f"/><ellipse cx="19.2" cy="14" rx="1.45" ry="3.7" fill="#1fb0d6" transform="rotate(10 19.2 14)"/></g></g></svg>
<div class="t " style="left:1247.42px;top:1035.00px;font-size:15.5px;line-height:19px;color:#1c2f52;letter-spacing:-0.759px;">Szakál Balázs</div>
<div class="abs tagb" style="left:1393.1px;top:1033.40px;width:59.6px;border-color:#dcdfe4"></div>
<div class="t " style="left:1403.17px;top:1036.80px;font-size:12.6px;line-height:20px;color:#172b4d;letter-spacing:0.189px;-webkit-text-stroke:0.35px #172b4d;">Smoke</div>
<div class="abs tagb" style="left:1536px;top:1033.40px;width:63.6px;border-color:#dcdfe4"></div>
<div class="t " style="left:1545.73px;top:1036.30px;font-size:12.9px;line-height:20px;color:#172b4d;letter-spacing:0.506px;-webkit-text-stroke:0.35px #172b4d;">Manual</div>
<div class="abs" style="left:412px;top:1065px;width:1845px;height:36px;background:#fff"></div>
<div class="abs hl" style="left:412px;top:1100px;width:1845px"></div>
<div class="abs vl" style="left:455.0px;top:1065px;height:36px"></div>
<div class="abs vl" style="left:499.0px;top:1065px;height:36px"></div>
<div class="abs vl" style="left:620.7px;top:1065px;height:36px"></div>
<div class="abs vl" style="left:972.5px;top:1065px;height:36px"></div>
<div class="abs vl" style="left:1111.5px;top:1065px;height:36px"></div>
<div class="abs vl" style="left:1210.5px;top:1065px;height:36px"></div>
<div class="abs vl" style="left:1386.5px;top:1065px;height:36px"></div>
<div class="abs vl" style="left:1529.5px;top:1065px;height:36px"></div>
<span class="ic" style="left:424.2px;top:1074.10px;width:17px;height:17px;color:#626f86"><svg width="17" height="17" viewBox="0 0 24 24" fill="none" stroke="currentColor" stroke-width="2" stroke-linecap="round" stroke-linejoin="round" ><circle cx="8.6" cy="5" r="2" fill="currentColor" stroke="none"/><circle cx="8.6" cy="12" r="2" fill="currentColor" stroke="none"/><circle cx="8.6" cy="19" r="2" fill="currentColor" stroke="none"/><circle cx="15.4" cy="5" r="2" fill="currentColor" stroke="none"/><circle cx="15.4" cy="12" r="2" fill="currentColor" stroke="none"/><circle cx="15.4" cy="19" r="2" fill="currentColor" stroke="none"/></svg></span>
<div class="abs cb" style="left:468px;top:1074.20px"></div>
<div class="t " style="left:504.28px;top:1072.60px;font-size:14px;line-height:20px;color:#172b4d;letter-spacing:-0.086px;font-family:'Liberation Mono',monospace;">KAN-TC-26</div>
<span class="ic" style="left:625.6px;top:1072.20px;width:18.2px;height:18.2px;color:#1d6bf3"><svg width="18.2" height="18.2" viewBox="0 0 24 24" fill="none" stroke="currentColor" stroke-width="1.9" stroke-linecap="round" stroke-linejoin="round" ><path d="M15 2H6a2 2 0 0 0-2 2v16a2 2 0 0 0 2 2h12a2 2 0 0 0 2-2V7Z"/><path d="M14 2v4a2 2 0 0 0 2 2h4"/><path d="M10 9H8"/><path d="M16 13H8"/><path d="M16 17H8"/></svg></span>
<div class="t " style="left:652.65px;top:1071.00px;font-size:15.2px;line-height:19px;color:#172b4d;letter-spacing:0.139px;-webkit-text-stroke:0.28px #172b4d;">Verify Heavy Duty Steel Bench navigate</div>
<div class="abs" style="left:978.1px;top:1070.10px;width:49.9px;height:22.05px;background:#dddee1;border-radius:3.5px"></div>
<div class="t " style="left:988.00px;top:1072.10px;font-size:13.3px;line-height:20px;color:#44546f;letter-spacing:0.509px;-webkit-text-stroke:0.4px #44546f;">Draft</div>
<div class="t " style="left:1217.35px;top:1071.60px;font-size:15px;line-height:20px;color:#626f86;letter-spacing:0.000px;">-</div>
<div class="abs tagb" style="left:1393.1px;top:1069.60px;width:81.6px;border-color:#dcdfe4"></div>
<div class="t " style="left:1402.86px;top:1073.00px;font-size:12.6px;line-height:20px;color:#172b4d;letter-spacing:0.430px;-webkit-text-stroke:0.35px #172b4d;">Functional</div>
<div class="abs tagb" style="left:1536px;top:1069.60px;width:121.7px;border-color:#dcdfe4"></div>
<div class="t " style="left:1545.73px;top:1072.50px;font-size:12.9px;line-height:20px;color:#172b4d;letter-spacing:0.544px;-webkit-text-stroke:0.35px #172b4d;">Not automatable</div>
<div class="abs" style="left:412px;top:1101px;width:1845px;height:36px;background:#fff"></div>
<div class="abs hl" style="left:412px;top:1136px;width:1845px"></div>
<div class="abs vl" style="left:455.0px;top:1101px;height:36px"></div>
<div class="abs vl" style="left:499.0px;top:1101px;height:36px"></div>
<div class="abs vl" style="left:620.7px;top:1101px;height:36px"></div>
<div class="abs vl" style="left:972.5px;top:1101px;height:36px"></div>
<div class="abs vl" style="left:1111.5px;top:1101px;height:36px"></div>
<div class="abs vl" style="left:1210.5px;top:1101px;height:36px"></div>
<div class="abs vl" style="left:1386.5px;top:1101px;height:36px"></div>
<div class="abs vl" style="left:1529.5px;top:1101px;height:36px"></div>
<span class="ic" style="left:424.2px;top:1110.30px;width:17px;height:17px;color:#626f86"><svg width="17" height="17" viewBox="0 0 24 24" fill="none" stroke="currentColor" stroke-width="2" stroke-linecap="round" stroke-linejoin="round" ><circle cx="8.6" cy="5" r="2" fill="currentColor" stroke="none"/><circle cx="8.6" cy="12" r="2" fill="currentColor" stroke="none"/><circle cx="8.6" cy="19" r="2" fill="currentColor" stroke="none"/><circle cx="15.4" cy="5" r="2" fill="currentColor" stroke="none"/><circle cx="15.4" cy="12" r="2" fill="currentColor" stroke="none"/><circle cx="15.4" cy="19" r="2" fill="currentColor" stroke="none"/></svg></span>
<div class="abs cb" style="left:468px;top:1110.40px"></div>
<div class="t " style="left:504.28px;top:1108.80px;font-size:14px;line-height:20px;color:#172b4d;letter-spacing:-0.086px;font-family:'Liberation Mono',monospace;">KAN-TC-27</div>
<span class="ic" style="left:625.6px;top:1108.40px;width:18.2px;height:18.2px;color:#1d6bf3"><svg width="18.2" height="18.2" viewBox="0 0 24 24" fill="none" stroke="currentColor" stroke-width="1.9" stroke-linecap="round" stroke-linejoin="round" ><path d="M15 2H6a2 2 0 0 0-2 2v16a2 2 0 0 0 2 2h12a2 2 0 0 0 2-2V7Z"/><path d="M14 2v4a2 2 0 0 0 2 2h4"/><path d="M10 9H8"/><path d="M16 13H8"/><path d="M16 17H8"/></svg></span>
<div class="t " style="left:652.65px;top:1107.00px;font-size:15.2px;line-height:19px;color:#172b4d;letter-spacing:0.119px;-webkit-text-stroke:0.28px #172b4d;">Verify Aerodynamic Concrete Shoes bypass</div>
<div class="abs" style="left:978.1px;top:1106.30px;width:76.9px;height:22.05px;background:#8fb8f6;border-radius:3.5px"></div>
<div class="t " style="left:988.05px;top:1108.80px;font-size:12.6px;line-height:20px;color:#172b4d;letter-spacing:0.134px;-webkit-text-stroke:0.4px #172b4d;">In Review</div>
<div class="abs bddb" style="left:1118.1px;top:1105.80px"><span class="pick"></span></div>
<div class="t " style="left:1149.95px;top:1109.20px;font-size:12.6px;line-height:20px;color:#1f845a;letter-spacing:-0.002px;-webkit-text-stroke:0.4px #1f845a;">BDD</div>
<svg class="abs" style="left:1217.00px;top:1105.70px" width="22" height="22" viewBox="0 0 22 22"><g clip-path="url(#cpB)"><g filter="url(#bl2)"><rect x="-2" y="-2" width="26" height="26" fill="#e6e7ea"/><ellipse cx="3.2" cy="16.5" rx="5.2" ry="6" fill="#2a2d3d"/><ellipse cx="17" cy="21" rx="7" ry="3.6" fill="#2a2d3d"/><ellipse cx="21.3" cy="12.5" rx="1.5" ry="4.5" fill="#4a4d5a"/><ellipse cx="11.6" cy="6.6" rx="7.8" ry="6.2" fill="#8d5d3c"/><ellipse cx="3.9" cy="9.3" rx="1.7" ry="2.2" fill="#8f6a50"/><ellipse cx="11" cy="13.8" rx="6.2" ry="7.3" fill="#cf9c84"/><ellipse cx="13.8" cy="14.5" rx="3" ry="5.5" fill="#c48d76"/><ellipse cx="8" cy="10.6" rx="2.2" ry="3.4" fill="#ecd2bf"/><ellipse cx="11.2" cy="11.4" rx="3.6" ry="0.8" fill="#8e5f4e"/><ellipse cx="11.3" cy="16.8" rx="2.2" ry="0.8" fill="#a8705f"/><ellipse cx="19.2" cy="14" rx="1.45" ry="3.7" fill="#1fb0d6" transform="rotate(10 19.2 14)"/></g></g></svg>
<div class="t " style="left:1247.42px;top:1108.00px;font-size:15.5px;line-height:19px;color:#1c2f52;letter-spacing:-0.759px;">Szakál Balázs</div>
<div class="abs tagb" style="left:1393.1px;top:1105.80px;width:85.5px;border-color:#dcdfe4"></div>
<div class="t " style="left:1402.83px;top:1108.70px;font-size:12.9px;line-height:20px;color:#172b4d;letter-spacing:0.539px;-webkit-text-stroke:0.35px #172b4d;">Integration</div>
<div class="abs tagb" style="left:1536px;top:1105.80px;width:120.7px;background:#ebecf0;border-color:#ebecf0"></div>
<div class="t " style="left:1546.57px;top:1109.20px;font-size:12.6px;line-height:20px;color:#172b4d;letter-spacing:0.452px;-webkit-text-stroke:0.35px #172b4d;">To be automated</div>
<div class="abs" style="left:412px;top:1137px;width:1845px;height:37px;background:#fff"></div>
<div class="abs hl" style="left:412px;top:1173px;width:1845px"></div>
<div class="abs vl" style="left:455.0px;top:1137px;height:37px"></div>
<div class="abs vl" style="left:499.0px;top:1137px;height:37px"></div>
<div class="abs vl" style="left:620.7px;top:1137px;height:37px"></div>
<div class="abs vl" style="left:972.5px;top:1137px;height:37px"></div>
<div class="abs vl" style="left:1111.5px;top:1137px;height:37px"></div>
<div class="abs vl" style="left:1210.5px;top:1137px;height:37px"></div>
<div class="abs vl" style="left:1386.5px;top:1137px;height:37px"></div>
<div class="abs vl" style="left:1529.5px;top:1137px;height:37px"></div>
<span class="ic" style="left:424.2px;top:1146.50px;width:17px;height:17px;color:#626f86"><svg width="17" height="17" viewBox="0 0 24 24" fill="none" stroke="currentColor" stroke-width="2" stroke-linecap="round" stroke-linejoin="round" ><circle cx="8.6" cy="5" r="2" fill="currentColor" stroke="none"/><circle cx="8.6" cy="12" r="2" fill="currentColor" stroke="none"/><circle cx="8.6" cy="19" r="2" fill="currentColor" stroke="none"/><circle cx="15.4" cy="5" r="2" fill="currentColor" stroke="none"/><circle cx="15.4" cy="12" r="2" fill="currentColor" stroke="none"/><circle cx="15.4" cy="19" r="2" fill="currentColor" stroke="none"/></svg></span>
<div class="abs cb" style="left:468px;top:1146.60px"></div>
<div class="t " style="left:504.28px;top:1145.00px;font-size:14px;line-height:20px;color:#172b4d;letter-spacing:-0.086px;font-family:'Liberation Mono',monospace;">KAN-TC-28</div>
<span class="ic" style="left:625.6px;top:1144.60px;width:18.2px;height:18.2px;color:#1d6bf3"><svg width="18.2" height="18.2" viewBox="0 0 24 24" fill="none" stroke="currentColor" stroke-width="1.9" stroke-linecap="round" stroke-linejoin="round" ><path d="M15 2H6a2 2 0 0 0-2 2v16a2 2 0 0 0 2 2h12a2 2 0 0 0 2-2V7Z"/><path d="M14 2v4a2 2 0 0 0 2 2h4"/><path d="M10 9H8"/><path d="M16 13H8"/><path d="M16 17H8"/></svg></span>
<div class="t " style="left:652.65px;top:1143.00px;font-size:15.2px;line-height:19px;color:#172b4d;letter-spacing:0.194px;-webkit-text-stroke:0.28px #172b4d;">Verify Incredible Wooden Car synthesize</div>
<div class="abs" style="left:978.1px;top:1142.50px;width:57.2px;height:22.05px;background:#b3df72;border-radius:3.5px"></div>
<div class="t " style="left:988.87px;top:1145.00px;font-size:12.6px;line-height:20px;color:#172b4d;letter-spacing:0.452px;-webkit-text-stroke:0.4px #172b4d;">Active</div>
<svg class="abs" style="left:1217.00px;top:1141.90px" width="22" height="22" viewBox="0 0 22 22"><g clip-path="url(#cpB)"><g filter="url(#bl2)"><rect x="-2" y="-2" width="26" height="26" fill="#e6e7ea"/><ellipse cx="3.2" cy="16.5" rx="5.2" ry="6" fill="#2a2d3d"/><ellipse cx="17" cy="21" rx="7" ry="3.6" fill="#2a2d3d"/><ellipse cx="21.3" cy="12.5" rx="1.5" ry="4.5" fill="#4a4d5a"/><ellipse cx="11.6" cy="6.6" rx="7.8" ry="6.2" fill="#8d5d3c"/><ellipse cx="3.9" cy="9.3" rx="1.7" ry="2.2" fill="#8f6a50"/><ellipse cx="11" cy="13.8" rx="6.2" ry="7.3" fill="#cf9c84"/><ellipse cx="13.8" cy="14.5" rx="3" ry="5.5" fill="#c48d76"/><ellipse cx="8" cy="10.6" rx="2.2" ry="3.4" fill="#ecd2bf"/><ellipse cx="11.2" cy="11.4" rx="3.6" ry="0.8" fill="#8e5f4e"/><ellipse cx="11.3" cy="16.8" rx="2.2" ry="0.8" fill="#a8705f"/><ellipse cx="19.2" cy="14" rx="1.45" ry="3.7" fill="#1fb0d6" transform="rotate(10 19.2 14)"/></g></g></svg>
<div class="t " style="left:1247.42px;top:1144.00px;font-size:15.5px;line-height:19px;color:#1c2f52;letter-spacing:-0.759px;">Szakál Balázs</div>
<div class="abs tagb" style="left:1393.1px;top:1142.00px;width:81.6px;border-color:#dcdfe4"></div>
<div class="t " style="left:1402.86px;top:1145.40px;font-size:12.6px;line-height:20px;color:#172b4d;letter-spacing:0.430px;-webkit-text-stroke:0.35px #172b4d;">Functional</div>
<div class="abs tagb" style="left:1536px;top:1142.00px;width:120.7px;background:#ebecf0;border-color:#ebecf0"></div>
<div class="t " style="left:1546.57px;top:1145.40px;font-size:12.6px;line-height:20px;color:#172b4d;letter-spacing:0.452px;-webkit-text-stroke:0.35px #172b4d;">To be automated</div>
<div class="abs" style="left:412px;top:1174px;width:1845px;height:36px;background:#fff"></div>
<div class="abs hl" style="left:412px;top:1209px;width:1845px"></div>
<div class="abs vl" style="left:455.0px;top:1174px;height:36px"></div>
<div class="abs vl" style="left:499.0px;top:1174px;height:36px"></div>
<div class="abs vl" style="left:620.7px;top:1174px;height:36px"></div>
<div class="abs vl" style="left:972.5px;top:1174px;height:36px"></div>
<div class="abs vl" style="left:1111.5px;top:1174px;height:36px"></div>
<div class="abs vl" style="left:1210.5px;top:1174px;height:36px"></div>
<div class="abs vl" style="left:1386.5px;top:1174px;height:36px"></div>
<div class="abs vl" style="left:1529.5px;top:1174px;height:36px"></div>
<span class="ic" style="left:424.2px;top:1182.70px;width:17px;height:17px;color:#626f86"><svg width="17" height="17" viewBox="0 0 24 24" fill="none" stroke="currentColor" stroke-width="2" stroke-linecap="round" stroke-linejoin="round" ><circle cx="8.6" cy="5" r="2" fill="currentColor" stroke="none"/><circle cx="8.6" cy="12" r="2" fill="currentColor" stroke="none"/><circle cx="8.6" cy="19" r="2" fill="currentColor" stroke="none"/><circle cx="15.4" cy="5" r="2" fill="currentColor" stroke="none"/><circle cx="15.4" cy="12" r="2" fill="currentColor" stroke="none"/><circle cx="15.4" cy="19" r="2" fill="currentColor" stroke="none"/></svg></span>
<div class="abs cb" style="left:468px;top:1182.80px"></div>
<div class="t " style="left:504.28px;top:1181.20px;font-size:14px;line-height:20px;color:#172b4d;letter-spacing:-0.086px;font-family:'Liberation Mono',monospace;">KAN-TC-29</div>
<span class="ic" style="left:625.6px;top:1180.80px;width:18.2px;height:18.2px;color:#1d6bf3"><svg width="18.2" height="18.2" viewBox="0 0 24 24" fill="none" stroke="currentColor" stroke-width="1.9" stroke-linecap="round" stroke-linejoin="round" ><path d="M15 2H6a2 2 0 0 0-2 2v16a2 2 0 0 0 2 2h12a2 2 0 0 0 2-2V7Z"/><path d="M14 2v4a2 2 0 0 0 2 2h4"/><path d="M10 9H8"/><path d="M16 13H8"/><path d="M16 17H8"/></svg></span>
<div class="t " style="left:652.65px;top:1179.00px;font-size:15.2px;line-height:19px;color:#172b4d;letter-spacing:0.208px;-webkit-text-stroke:0.28px #172b4d;">Verify Aerodynamic Wool Shoes parse</div>
<div class="abs" style="left:978.1px;top:1178.70px;width:49.9px;height:22.05px;background:#dddee1;border-radius:3.5px"></div>
<div class="t " style="left:988.00px;top:1180.70px;font-size:13.3px;line-height:20px;color:#44546f;letter-spacing:0.509px;-webkit-text-stroke:0.4px #44546f;">Draft</div>
<div class="abs bddb" style="left:1118.1px;top:1178.20px"><span class="pick"></span></div>
<div class="t " style="left:1149.95px;top:1181.60px;font-size:12.6px;line-height:20px;color:#1f845a;letter-spacing:-0.002px;-webkit-text-stroke:0.4px #1f845a;">BDD</div>
<svg class="abs" style="left:1217.00px;top:1178.10px" width="22" height="22" viewBox="0 0 22 22"><g clip-path="url(#cpB)"><g filter="url(#bl2)"><rect x="-2" y="-2" width="26" height="26" fill="#e6e7ea"/><ellipse cx="3.2" cy="16.5" rx="5.2" ry="6" fill="#2a2d3d"/><ellipse cx="17" cy="21" rx="7" ry="3.6" fill="#2a2d3d"/><ellipse cx="21.3" cy="12.5" rx="1.5" ry="4.5" fill="#4a4d5a"/><ellipse cx="11.6" cy="6.6" rx="7.8" ry="6.2" fill="#8d5d3c"/><ellipse cx="3.9" cy="9.3" rx="1.7" ry="2.2" fill="#8f6a50"/><ellipse cx="11" cy="13.8" rx="6.2" ry="7.3" fill="#cf9c84"/><ellipse cx="13.8" cy="14.5" rx="3" ry="5.5" fill="#c48d76"/><ellipse cx="8" cy="10.6" rx="2.2" ry="3.4" fill="#ecd2bf"/><ellipse cx="11.2" cy="11.4" rx="3.6" ry="0.8" fill="#8e5f4e"/><ellipse cx="11.3" cy="16.8" rx="2.2" ry="0.8" fill="#a8705f"/><ellipse cx="19.2" cy="14" rx="1.45" ry="3.7" fill="#1fb0d6" transform="rotate(10 19.2 14)"/></g></g></svg>
<div class="t " style="left:1247.42px;top:1180.00px;font-size:15.5px;line-height:19px;color:#1c2f52;letter-spacing:-0.759px;">Szakál Balázs</div>
<div class="abs tagb" style="left:1393.1px;top:1178.20px;width:70.7px;border-color:#dcdfe4"></div>
<div class="t " style="left:1402.86px;top:1181.60px;font-size:12.6px;line-height:20px;color:#172b4d;letter-spacing:0.410px;-webkit-text-stroke:0.35px #172b4d;">Usability</div>
<div class="abs tagb" style="left:1536px;top:1178.20px;width:120.7px;background:#ebecf0;border-color:#ebecf0"></div>
<div class="t " style="left:1546.57px;top:1181.60px;font-size:12.6px;line-height:20px;color:#172b4d;letter-spacing:0.452px;-webkit-text-stroke:0.35px #172b4d;">To be automated</div>
<div class="abs" style="left:2257px;top:257px;width:15px;height:950px;background:#fafafa;border-left:1px solid #f0f0f0"></div>
<div class="abs" style="left:2260px;top:275px;width:9px;height:467.5px;background:#8b8b8b;border-radius:4.5px"></div>
<svg class="abs" style="left:2259.5px;top:261.5px" width="10" height="7" viewBox="0 0 10 7"><path d="M5 0.8 9.3 6.2H0.7Z" fill="#8b8b8b" stroke="#8b8b8b" stroke-width="1" stroke-linejoin="round"/></svg>
<svg class="abs" style="left:2259.5px;top:1195px" width="10" height="7" viewBox="0 0 10 7"><path d="M5 6.2 9.3 0.8H0.7Z" fill="#8b8b8b" stroke="#8b8b8b" stroke-width="1" stroke-linejoin="round"/></svg>
</div></div>
<div class="abs" style="left:41px;top:1225px;width:2250px;height:1px;background:#dcdfe4"></div>
<div class="abs btn" style="left:978px;top:1230.5px;width:41px;height:30px"></div>
<span class="ic" style="left:990.30px;top:1237.80px;width:16px;height:16px;color:#8590a2"><svg width="16" height="16" viewBox="0 0 24 24" fill="none" stroke="currentColor" stroke-width="2" stroke-linecap="round" stroke-linejoin="round" ><path d="m12 19-7-7 7-7"/><path d="M19 12H5"/></svg></span>
<div class="t " style="left:1036.96px;top:1236.10px;font-size:15.2px;line-height:20px;color:#172b4d;letter-spacing:-0.200px;-webkit-text-stroke:0.3px #172b4d;">Page 1 of 2</div>
<div class="abs btn" style="left:1130.3px;top:1230.5px;width:41.2px;height:30px"></div>
<span class="ic" style="left:1142.80px;top:1237.80px;width:16px;height:16px;color:#172b4d"><svg width="16" height="16" viewBox="0 0 24 24" fill="none" stroke="currentColor" stroke-width="2" stroke-linecap="round" stroke-linejoin="round" ><path d="M5 12h14"/><path d="m12 5 7 7-7 7"/></svg></span>
<div class="t " style="left:2095.84px;top:1236.70px;font-size:15.2px;line-height:20px;color:#626f86;letter-spacing:0.083px;">Showing 1-50 of 100 items</div>
<div class="abs drag" style="left:240px;top:439px;width:283.3px;height:71.7px">
<div class="abs dback"></div>
<div class="abs dfront"></div>
</div>
<span class="ic" style="left:255.25px;top:456.55px;width:18.9px;height:18.9px;color:#5b93f7"><svg width="18.9" height="18.9" viewBox="0 0 24 24" fill="none" stroke="currentColor" stroke-width="1.9" stroke-linecap="round" stroke-linejoin="round" ><path d="M15 2H6a2 2 0 0 0-2 2v16a2 2 0 0 0 2 2h12a2 2 0 0 0 2-2V7Z"/><path d="M14 2v4a2 2 0 0 0 2 2h4"/><path d="M10 9H8"/><path d="M16 13H8"/><path d="M16 17H8"/></svg></span>
<div class="t " style="left:284.05px;top:456.20px;font-size:15.2px;line-height:20px;color:#505f79;letter-spacing:0.012px;-webkit-text-stroke:0.2px #505f79;">Verify Sleek Linen Table ...</div>
<div class="abs dbadge" style="left:477px;top:450.3px"></div>
<div class="t " style="left:487.83px;top:455.50px;font-size:15.4px;line-height:20px;color:#fff;letter-spacing:-0.123px;font-weight:700;">2</div>
<svg class="abs" style="left:222px;top:430px" width="22" height="32" viewBox="0 0 22 32"><rect x="7.3" y="18.1" width="10.9" height="9.8" fill="#fff" stroke="#222" stroke-width="1.1" stroke-dasharray="1.7 1.1"/><path d="M3.1 3.2V18.3L6.5 14.9L8.9 19.9L11.3 18.8L9 14.2H15.1Z" fill="#fff" stroke="#111" stroke-width="1.15" stroke-linejoin="miter"/></svg>
</div></body></html>
